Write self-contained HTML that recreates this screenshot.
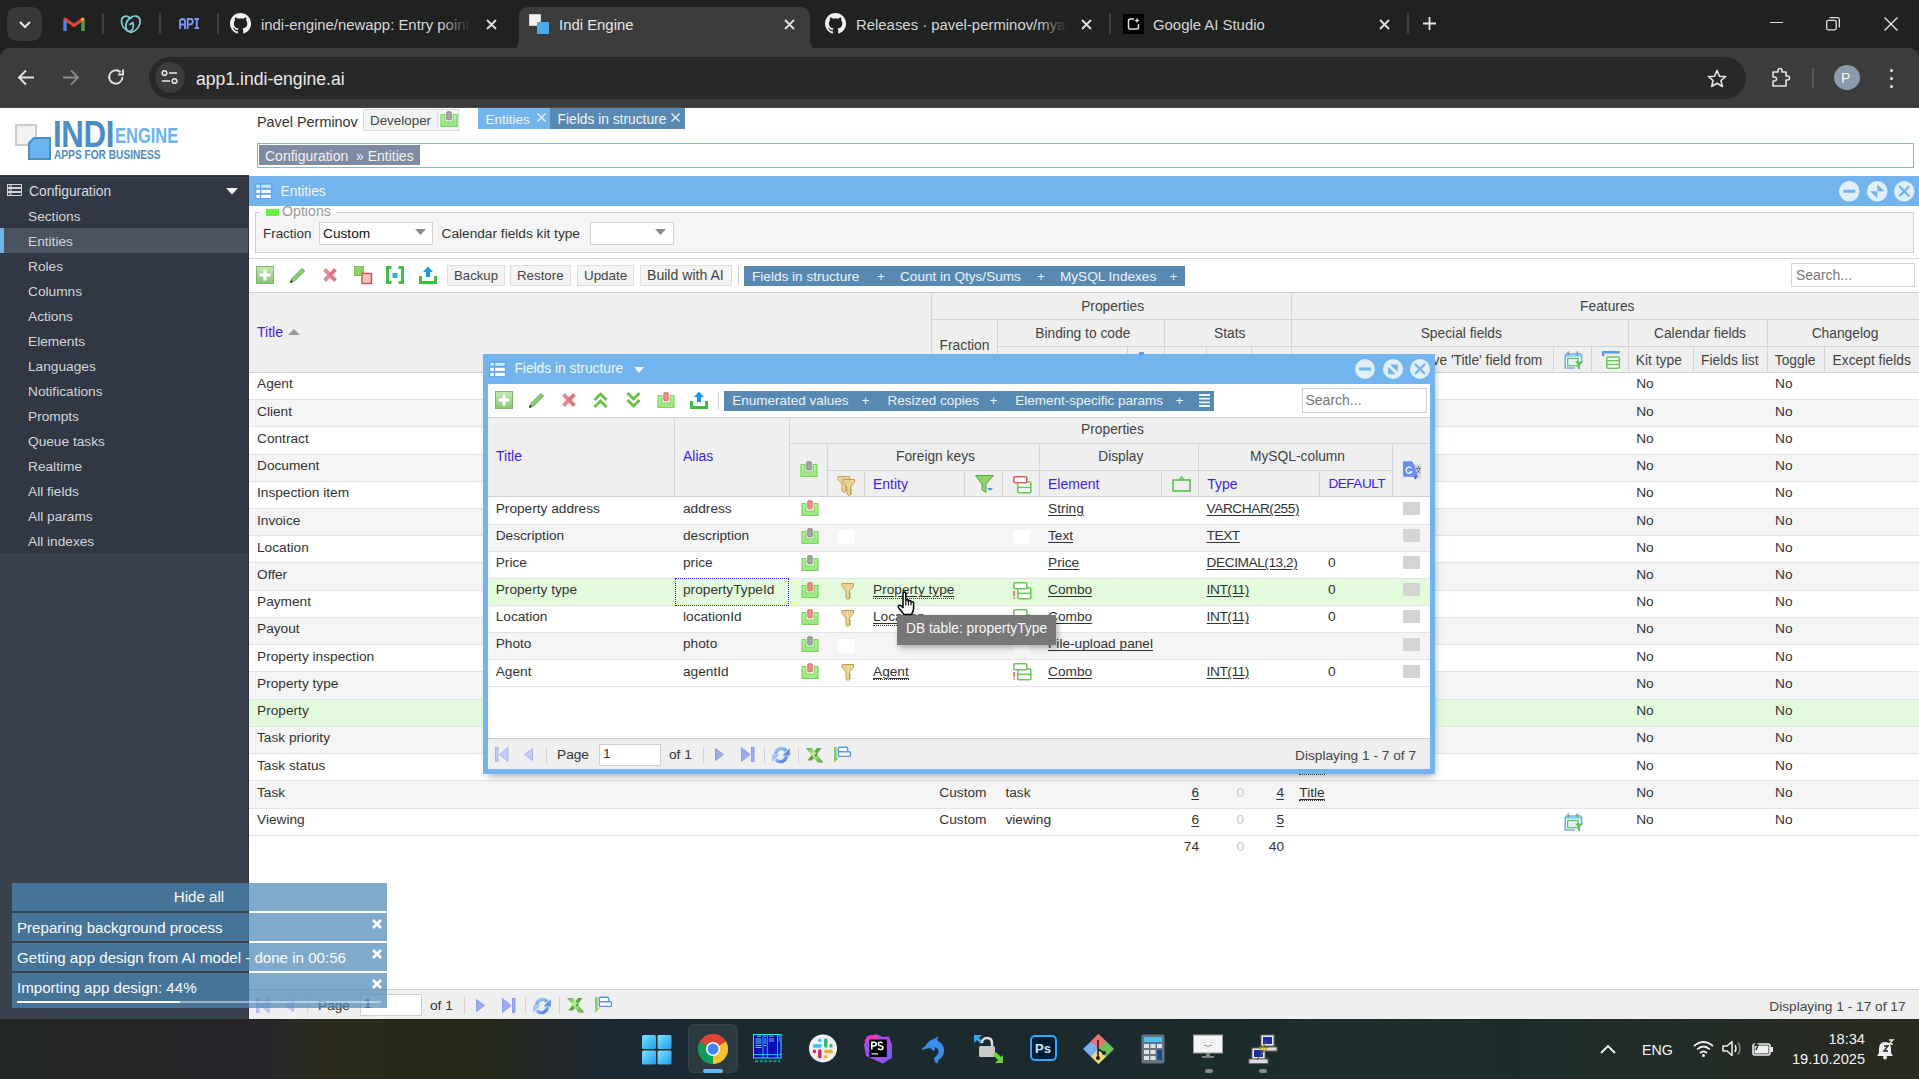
<!DOCTYPE html><html><head><meta charset="utf-8"><style>
*{box-sizing:border-box;margin:0;padding:0}
html,body{width:1919px;height:1079px;overflow:hidden;background:#fff;font-family:"Liberation Sans",sans-serif;font-size:13.6px;color:#333}
.a{position:absolute}
.t{position:absolute;white-space:nowrap;line-height:1}
svg{position:absolute;overflow:visible}
</style></head><body>
<div class="a" style="left:0px;top:0px;width:1919px;height:60px;background:#202121;"></div>
<div class="a" style="left:0px;top:48px;width:1919px;height:60px;background:#3c3c3c;border-radius:9px 9px 0 0"></div>
<div class="a" style="left:0px;top:107px;width:1919px;height:1px;background:#474847;"></div>
<div class="a" style="left:7px;top:7px;width:35px;height:34px;background:#383838;border-radius:10px"></div>
<svg style="left:18px;top:20px;" width="14" height="9" viewBox="0 0 14 9"><path d="M2 2 L7 7 L12 2" stroke="#e6e6e6" stroke-width="2" fill="none"/></svg>
<svg style="left:64px;top:16px;" width="20" height="16" viewBox="0 0 20 16"><path d="M1 15V3 L10 9.5 L19 3V15" fill="none" stroke="#ea4335" stroke-width="3" stroke-linejoin="round"/><path d="M1 15V4" stroke="#4285f4" stroke-width="3"/><path d="M19 15V4" stroke="#34a853" stroke-width="3"/><path d="M17.5 2.5L19.5 4" stroke="#fbbc04" stroke-width="3"/></svg>
<div class="a" style="left:102px;top:13px;width:2px;height:21px;background:#404040;border-radius:1px"></div>
<div class="a" style="left:159px;top:13px;width:2px;height:21px;background:#404040;border-radius:1px"></div>
<div class="a" style="left:217px;top:13px;width:2px;height:21px;background:#404040;border-radius:1px"></div>
<div class="a" style="left:1109px;top:13px;width:2px;height:21px;background:#404040;border-radius:1px"></div>
<div class="a" style="left:1407px;top:13px;width:2px;height:21px;background:#404040;border-radius:1px"></div>
<svg style="left:120px;top:14px;" width="22" height="20" viewBox="0 0 22 20"><path d="M11 18.5 C4 16 1 11 1.5 6.5 C2 2 6.5 1 9.5 3.5 M11 3.6 C14 1 19 1.5 20 6 C21 11 17.5 16.5 11 18.5" fill="none" stroke="#80d2d8" stroke-width="1.7" stroke-linecap="round"/><path d="M11.5 3.5 C7 5.5 5 10 6 14 C7 18 11 18.5 12.5 15 C13.5 12.5 13.5 10 13 8.5 L10 10.5" fill="none" stroke="#80d2d8" stroke-width="1.7" stroke-linecap="round" stroke-linejoin="round"/></svg>
<svg style="left:179px;top:18px;" width="21" height="11" viewBox="0 0 21 11"><path d="M1 11V3.5Q1 1 3.5 1Q6 1 6 3.5V11M1 6.5H6" fill="none" stroke="#7f9af2" stroke-width="1.8"/><path d="M8.7 11V1H11.5Q13.8 1 13.8 3.6Q13.8 6.3 11.5 6.3H8.7" fill="none" stroke="#7f9af2" stroke-width="1.8"/><path d="M15.5 1H20M15.5 10.1H20M17.75 1V10.1" fill="none" stroke="#7f9af2" stroke-width="1.8"/></svg>
<svg style="left:230px;top:13px;" width="21" height="21" viewBox="0 0 21 21"><path fill="#f0f0f0" d="M10.5 0C4.7 0 0 4.7 0 10.5c0 4.6 3 8.6 7.2 10 .5.1.7-.2.7-.5v-1.8c-2.9.6-3.5-1.4-3.5-1.4-.5-1.2-1.2-1.5-1.2-1.5-.9-.6.1-.6.1-.6 1 .1 1.6 1.1 1.6 1.1.9 1.6 2.5 1.1 3.1.9.1-.7.4-1.1.7-1.4-2.3-.3-4.8-1.2-4.8-5.1 0-1.1.4-2.1 1.1-2.8-.1-.3-.5-1.3.1-2.8 0 0 .9-.3 2.9 1.1.8-.2 1.7-.3 2.6-.3s1.8.1 2.6.3c2-1.4 2.9-1.1 2.9-1.1.6 1.5.2 2.5.1 2.8.7.7 1.1 1.7 1.1 2.8 0 4-2.4 4.8-4.8 5.1.4.3.7 1 .7 1.9v2.8c0 .3.2.6.7.5 4.2-1.4 7.2-5.4 7.2-10C21 4.7 16.3 0 10.5 0z"/></svg>
<svg style="left:825px;top:13px;" width="21" height="21" viewBox="0 0 21 21"><path fill="#f0f0f0" d="M10.5 0C4.7 0 0 4.7 0 10.5c0 4.6 3 8.6 7.2 10 .5.1.7-.2.7-.5v-1.8c-2.9.6-3.5-1.4-3.5-1.4-.5-1.2-1.2-1.5-1.2-1.5-.9-.6.1-.6.1-.6 1 .1 1.6 1.1 1.6 1.1.9 1.6 2.5 1.1 3.1.9.1-.7.4-1.1.7-1.4-2.3-.3-4.8-1.2-4.8-5.1 0-1.1.4-2.1 1.1-2.8-.1-.3-.5-1.3.1-2.8 0 0 .9-.3 2.9 1.1.8-.2 1.7-.3 2.6-.3s1.8.1 2.6.3c2-1.4 2.9-1.1 2.9-1.1.6 1.5.2 2.5.1 2.8.7.7 1.1 1.7 1.1 2.8 0 4-2.4 4.8-4.8 5.1.4.3.7 1 .7 1.9v2.8c0 .3.2.6.7.5 4.2-1.4 7.2-5.4 7.2-10C21 4.7 16.3 0 10.5 0z"/></svg>
<div class="a" style="left:261px;top:8px;width:210px;height:30px;overflow:hidden">
<div class="t" style="left:0px;top:9.6px;font-size:14.9px;color:#d6d6d6;">indi-engine/newapp: Entry point</div>
</div>
<div class="a" style="left:440px;top:8px;width:32px;height:30px;background:linear-gradient(90deg,rgba(32,33,33,0),#202121 95%);"></div>
<svg style="left:486px;top:19px;" width="11" height="11" viewBox="0 0 11 11"><path d="M1 1L10 10M10 1L1 10" stroke="#e0e0e0" stroke-width="1.8"/></svg>
<div class="a" style="left:519px;top:7px;width:291px;height:42px;background:#3c3c3c;border-radius:9px 9px 0 0"></div>
<svg style="left:511px;top:39px;" width="8" height="10" viewBox="0 0 8 10"><path d="M0 10 Q8 10 8 0 V10Z" fill="#3c3c3c"/></svg>
<svg style="left:810px;top:39px;" width="8" height="10" viewBox="0 0 8 10"><path d="M8 10 Q0 10 0 0 V10Z" fill="#3c3c3c"/></svg>
<svg style="left:529px;top:14px;" width="21" height="20" viewBox="0 0 21 20"><rect x="0.5" y="0.5" width="11" height="11" fill="#f2f2f2" stroke="#cfcfcf"/><rect x="8" y="8" width="12" height="12" fill="#4aa8ee"/></svg>
<div class="t" style="left:559px;top:17.6px;font-size:14.9px;color:#e6e6e6;">Indi Engine</div>
<svg style="left:784px;top:19px;" width="11" height="11" viewBox="0 0 11 11"><path d="M1 1L10 10M10 1L1 10" stroke="#e0e0e0" stroke-width="1.8"/></svg>
<div class="a" style="left:856px;top:8px;width:212px;height:30px;overflow:hidden">
<div class="t" style="left:0px;top:9.6px;font-size:14.9px;color:#d6d6d6;">Releases · pavel-perminov/myapp</div>
</div>
<div class="a" style="left:1038px;top:8px;width:31px;height:30px;background:linear-gradient(90deg,rgba(32,33,33,0),#202121 95%);"></div>
<svg style="left:1081px;top:19px;" width="11" height="11" viewBox="0 0 11 11"><path d="M1 1L10 10M10 1L1 10" stroke="#e0e0e0" stroke-width="1.8"/></svg>
<div class="a" style="left:1123px;top:14px;width:21px;height:20px;background:#000;"></div>
<svg style="left:1127px;top:17px;" width="14" height="14" viewBox="0 0 14 14"><path d="M7 2 H3 Q1.5 2 1.5 3.5 V10.5 Q1.5 12 3 12 H10 Q11.5 12 11.5 10.5 V7" fill="none" stroke="#e0e0e0" stroke-width="1.5"/><path d="M10 0.5 L10.8 2.7 L13 3.5 L10.8 4.3 L10 6.5 L9.2 4.3 L7 3.5 L9.2 2.7Z" fill="#e0e0e0"/></svg>
<div class="t" style="left:1153px;top:17.6px;font-size:14.9px;color:#d6d6d6;">Google AI Studio</div>
<svg style="left:1379px;top:19px;" width="11" height="11" viewBox="0 0 11 11"><path d="M1 1L10 10M10 1L1 10" stroke="#e0e0e0" stroke-width="1.8"/></svg>
<svg style="left:1423px;top:17px;" width="13" height="13" viewBox="0 0 13 13"><path d="M6.5 0V13M0 6.5H13" stroke="#e6e6e6" stroke-width="1.8"/></svg>
<div class="a" style="left:1770px;top:22px;width:13px;height:1.3px;background:#e0e0e0;"></div>
<svg style="left:1826px;top:17px;" width="14" height="14" viewBox="0 0 14 14"><rect x="0.7" y="3.3" width="9.5" height="9.5" rx="1.5" fill="none" stroke="#e0e0e0" stroke-width="1.3"/><path d="M3.5 0.7H11.5Q13.3 0.7 13.3 2.5V10.5" fill="none" stroke="#e0e0e0" stroke-width="1.3"/></svg>
<svg style="left:1884px;top:17px;" width="14" height="14" viewBox="0 0 14 14"><path d="M0.5 0.5L13.5 13.5M13.5 0.5L0.5 13.5" stroke="#e6e6e6" stroke-width="1.4"/></svg>
<svg style="left:17px;top:69px;" width="18" height="17" viewBox="0 0 18 17"><path d="M17 8.5H2M9 1.5L2 8.5L9 15.5" fill="none" stroke="#e3e3e3" stroke-width="1.9"/></svg>
<svg style="left:62px;top:69px;" width="18" height="17" viewBox="0 0 18 17"><path d="M1 8.5H16M9 1.5L16 8.5L9 15.5" fill="none" stroke="#8a8a8a" stroke-width="1.9"/></svg>
<svg style="left:107px;top:68px;" width="18" height="18" viewBox="0 0 18 18"><path d="M15.5 9 A6.7 6.7 0 1 1 13.5 4.2" fill="none" stroke="#e3e3e3" stroke-width="1.9"/><path d="M16 1.5V6.5H11" fill="none" stroke="#e3e3e3" stroke-width="1.9"/></svg>
<div class="a" style="left:149px;top:57px;width:1597px;height:42px;background:#282828;border-radius:21px"></div>
<div class="a" style="left:155px;top:62px;width:30px;height:31px;background:#3c3c3c;border-radius:50%"></div>
<svg style="left:161px;top:70px;" width="18" height="14" viewBox="0 0 18 14"><circle cx="3.5" cy="3" r="2.3" fill="none" stroke="#e3e3e3" stroke-width="1.6"/><path d="M8 3H16" stroke="#e3e3e3" stroke-width="1.6"/><circle cx="13.5" cy="11" r="2.3" fill="none" stroke="#e3e3e3" stroke-width="1.6"/><path d="M1 11H9" stroke="#e3e3e3" stroke-width="1.6"/></svg>
<div class="t" style="left:196px;top:71px;font-size:17.6px;color:#e8e8e8;">app1.indi-engine.ai</div>
<svg style="left:1707px;top:69px;" width="20" height="19" viewBox="0 0 20 19"><path d="M10 1.5L12.5 7.2L18.6 7.6L13.9 11.5L15.4 17.5L10 14.2L4.6 17.5L6.1 11.5L1.4 7.6L7.5 7.2Z" fill="none" stroke="#e3e3e3" stroke-width="1.6" stroke-linejoin="round"/></svg>
<svg style="left:1771px;top:67px;" width="21" height="21" viewBox="0 0 21 21"><path d="M2 5H7V3.5A2 2 0 0 1 11 3.5V5H15V9H16.5A2 2 0 0 1 16.5 13H15V19H2V14H3.5A2 2 0 0 0 3.5 10H2Z" fill="none" stroke="#e3e3e3" stroke-width="1.6" stroke-linejoin="round"/></svg>
<div class="a" style="left:1812px;top:68px;width:2px;height:20px;background:#5a5a5a;"></div>
<div class="a" style="left:1834px;top:65px;width:26px;height:25px;background:#8a9cab;border-radius:50%"></div>
<div class="t" style="left:1841px;top:71px;font-size:14px;color:#f4f4f4;">P</div>
<div class="a" style="left:1890px;top:68.5px;width:3.4px;height:3.4px;background:#e3e3e3;border-radius:50%"></div>
<div class="a" style="left:1890px;top:76.5px;width:3.4px;height:3.4px;background:#e3e3e3;border-radius:50%"></div>
<div class="a" style="left:1890px;top:84.5px;width:3.4px;height:3.4px;background:#e3e3e3;border-radius:50%"></div>
<svg style="left:15px;top:124px;" width="36" height="35" viewBox="0 0 36 35"><rect x="1" y="1" width="20" height="20" fill="#f2f2f2" stroke="#cccccc" stroke-width="2"/><path d="M19 14 H35 V35 H14 V19 Z" fill="#6ab4f0" stroke="#4d8dc1" stroke-width="2"/></svg>
<div class="t" style="left:53px;top:115.7px;font-size:37.7px;color:#4d8dc1;font-weight:bold;transform:scaleX(0.83);transform-origin:0 0;letter-spacing:-0.5px">INDI</div>
<div class="t" style="left:115px;top:125.1px;font-size:22.3px;color:#6ab4f0;font-weight:bold;transform:scaleX(0.74);transform-origin:0 0">ENGINE</div>
<div class="t" style="left:54px;top:148.0px;font-size:13.6px;color:#4d8dc1;font-weight:bold;transform:scaleX(0.747);transform-origin:0 0">APPS FOR BUSINESS</div>
<div class="t" style="left:257px;top:114.5px;font-size:14.4px;color:#333;">Pavel Perminov</div>
<div class="a" style="left:363px;top:109px;width:96px;height:22px;background:#f4f4f4;border:1px solid #dcdcdc"></div>
<div class="a" style="left:437px;top:110px;width:1px;height:20px;background:#dcdcdc;"></div>
<div class="t" style="left:370px;top:113.5px;font-size:13.4px;color:#444;">Developer</div>
<svg style="left:440px;top:111px;" width="18" height="17" viewBox="0 0 18 17"><defs><linearGradient id="su" x1="0" y1="0" x2="0" y2="1"><stop offset="0" stop-color="#b4f59c"/><stop offset="1" stop-color="#98e67e"/></linearGradient></defs><path d="M1 3.5 H4.8 V11 H13.2 V3.5 H17 V15.5 H1 Z" fill="url(#su)" stroke="#78d65c" stroke-width="1.2" stroke-linejoin="round"/><rect x="6.8" y="0.8" width="4.4" height="8" rx="0.6" fill="#a8a8a8" stroke="#7a7a7a" stroke-width="0.9"/></svg>
<div class="a" style="left:478px;top:108px;width:72px;height:21px;background:#72b4ee;"></div>
<div class="t" style="left:485.5px;top:112.5px;font-size:13.5px;color:#f4f4f4;">Entities</div>
<svg style="left:537px;top:113px;" width="9" height="9" viewBox="0 0 9 9"><path d="M0.5 0.5L8.5 8.5M8.5 0.5L0.5 8.5" stroke="#eaf3fb" stroke-width="1.3"/></svg>
<div class="a" style="left:550px;top:108px;width:135px;height:21px;background:#5889b3;"></div>
<div class="t" style="left:557.5px;top:112.5px;font-size:13.8px;color:#f4f4f4;">Fields in structure</div>
<svg style="left:671px;top:113px;" width="9" height="9" viewBox="0 0 9 9"><path d="M0.5 0.5L8.5 8.5M8.5 0.5L0.5 8.5" stroke="#eaf3fb" stroke-width="1.3"/></svg>
<div class="a" style="left:257px;top:143px;width:1657px;height:25px;background:#fff;border:1px solid #7ab8ef"></div>
<div class="a" style="left:259px;top:145px;width:161px;height:20px;background:#7f8aa3;"></div>
<div class="t" style="left:265px;top:149px;font-size:14px;color:#f2f2f2;">Configuration &nbsp;» Entities</div>
<div class="a" style="left:0px;top:175px;width:249px;height:844px;background:#38414c;"></div>
<div class="a" style="left:0px;top:176px;width:248px;height:377px;background:#313743;"></div>
<div class="a" style="left:0px;top:176px;width:248px;height:1px;background:#262b33;"></div>
<div class="a" style="left:0px;top:177px;width:248px;height:1px;background:#3a424e;"></div>
<div class="a" style="left:248px;top:175px;width:1px;height:844px;background:#2c333d;"></div>
<svg style="left:7px;top:184px;" width="15" height="12" viewBox="0 0 15 12"><rect x="0.5" y="0.5" width="14" height="3" fill="none" stroke="#cfd3d8"/><rect x="0.5" y="4.5" width="14" height="3" fill="none" stroke="#cfd3d8"/><rect x="0.5" y="8.5" width="14" height="3" fill="none" stroke="#cfd3d8"/><rect x="2" y="1.5" width="3" height="1" fill="#cfd3d8"/><rect x="2" y="5.5" width="3" height="1" fill="#cfd3d8"/><rect x="2" y="9.5" width="3" height="1" fill="#cfd3d8"/></svg>
<div class="t" style="left:29px;top:184.5px;font-size:13.8px;color:#d9dde2;">Configuration</div>
<svg style="left:226px;top:188px;" width="12" height="7" viewBox="0 0 12 7"><path d="M0 0H12L6 6.5Z" fill="#f4f4f4"/></svg>
<div class="a" style="left:0px;top:228px;width:248px;height:25px;background:#4b5260;"></div>
<div class="a" style="left:0px;top:228px;width:4px;height:25px;background:#6fb3ea;"></div>
<div class="t" style="left:28px;top:209.5px;font-size:13.7px;color:#d2d6db;">Sections</div>
<div class="t" style="left:28px;top:234.5px;font-size:13.7px;color:#d2d6db;">Entities</div>
<div class="t" style="left:28px;top:259.5px;font-size:13.7px;color:#d2d6db;">Roles</div>
<div class="t" style="left:28px;top:284.5px;font-size:13.7px;color:#d2d6db;">Columns</div>
<div class="t" style="left:28px;top:309.5px;font-size:13.7px;color:#d2d6db;">Actions</div>
<div class="t" style="left:28px;top:334.5px;font-size:13.7px;color:#d2d6db;">Elements</div>
<div class="t" style="left:28px;top:359.5px;font-size:13.7px;color:#d2d6db;">Languages</div>
<div class="t" style="left:28px;top:384.5px;font-size:13.7px;color:#d2d6db;">Notifications</div>
<div class="t" style="left:28px;top:409.5px;font-size:13.7px;color:#d2d6db;">Prompts</div>
<div class="t" style="left:28px;top:434.5px;font-size:13.7px;color:#d2d6db;">Queue tasks</div>
<div class="t" style="left:28px;top:459.5px;font-size:13.7px;color:#d2d6db;">Realtime</div>
<div class="t" style="left:28px;top:484.5px;font-size:13.7px;color:#d2d6db;">All fields</div>
<div class="t" style="left:28px;top:509.5px;font-size:13.7px;color:#d2d6db;">All params</div>
<div class="t" style="left:28px;top:534.5px;font-size:13.7px;color:#d2d6db;">All indexes</div>
<div class="a" style="left:249px;top:176px;width:1670px;height:30px;background:#72b4ee;"></div>
<svg style="left:255.3px;top:183.3px;" width="17" height="17" viewBox="0 0 17 17"><rect x="0" y="0" width="17.4" height="16.2" rx="1.6" fill="#69a3f0"/><rect x="1.3" y="1.8" width="3.6" height="3" fill="#bdf0fb"/><rect x="6.2" y="1.8" width="9.6" height="3" fill="#bdf0fb"/><rect x="1.3" y="6.8" width="3.6" height="3.2" fill="#fff"/><rect x="6.2" y="6.8" width="9.6" height="3.2" fill="#fff"/><rect x="1.3" y="11.8" width="3.6" height="3.2" fill="#fff"/><rect x="6.2" y="11.8" width="9.6" height="3.2" fill="#fff"/></svg>
<div class="t" style="left:280.5px;top:184.5px;font-size:13.8px;color:#f4f6f8;">Entities</div>
<svg style="left:1839px;top:180.5px;" width="20.5" height="20.5" viewBox="0 0 20.5 20.5"><circle cx="10.25" cy="10.25" r="10.25" fill="#e1eefb"/><rect x="4.25" y="8.75" width="12" height="3" fill="#72b4ee"/></svg>
<svg style="left:1866.5px;top:180.5px;" width="20.5" height="20.5" viewBox="0 0 20.5 20.5"><circle cx="10.25" cy="10.25" r="10.25" fill="#e1eefb"/><path d="M10.25 3.25 V10.25 H17.25 Z" fill="#72b4ee"/><path d="M3.25 10.25 H10.25 V17.25 Z" fill="#72b4ee"/></svg>
<svg style="left:1894px;top:180.5px;" width="20.5" height="20.5" viewBox="0 0 20.5 20.5"><circle cx="10.25" cy="10.25" r="10.25" fill="#e1eefb"/><path d="M5.25 5.25L15.25 15.25M15.25 5.25L5.25 15.25" stroke="#72b4ee" stroke-width="2.2"/></svg>
<div class="a" style="left:249px;top:206px;width:1670px;height:86px;background:#fff;"></div>
<div class="a" style="left:255px;top:212px;width:1659px;height:41px;background:#f5f5f5;border:1px solid #cfcfcf;border-top:1px solid #cfcfcf"></div>
<div class="a" style="left:260px;top:211px;width:76px;height:3px;background:#fff;"></div>
<div class="a" style="left:266px;top:209px;width:13px;height:6.5px;background:#6cf048;"></div>
<div class="t" style="left:282px;top:203.5px;font-size:14.2px;color:#999;">Options</div>
<div class="t" style="left:263px;top:226.5px;font-size:13.4px;color:#333;">Fraction</div>
<div class="a" style="left:319px;top:221.5px;width:114px;height:23px;background:#fff;border:1px solid #d2d2d2"></div>
<div class="t" style="left:323px;top:226.5px;font-size:13.7px;color:#111;">Custom</div>
<svg style="left:415px;top:229px;" width="11" height="6" viewBox="0 0 11 6"><path d="M0 0H11L5.5 6Z" fill="#8d8d8d"/></svg>
<div class="t" style="left:441.5px;top:226.5px;font-size:13.7px;color:#333;">Calendar fields kit type</div>
<div class="a" style="left:590px;top:221.5px;width:84px;height:23px;background:#fff;border:1px solid #d2d2d2"></div>
<svg style="left:655px;top:229px;" width="11" height="6" viewBox="0 0 11 6"><path d="M0 0H11L5.5 6Z" fill="#8d8d8d"/></svg>
<div class="a" style="left:249px;top:258px;width:1670px;height:1px;background:#d6d6d6;"></div>
<svg style="left:256px;top:266px;" width="18" height="18" viewBox="0 0 18 18"><defs><linearGradient id="ga" x1="0" y1="0" x2="0" y2="1"><stop offset="0" stop-color="#c2ecb0"/><stop offset="1" stop-color="#86c676"/></linearGradient></defs><rect x="0.5" y="0.5" width="17" height="17" fill="url(#ga)" stroke="#7fb86e"/><path d="M9 3.5V14.5M3.5 9H14.5" stroke="#fff" stroke-width="3.2"/></svg>
<svg style="left:289px;top:267px;" width="17" height="17" viewBox="0 0 17 17"><path d="M1.5 15.5 L3 11.5 L13 1.5 L15.5 4 L5.5 14 Z" fill="#8ed16c" stroke="#5aa546" stroke-width="1"/><path d="M1.5 15.5L3 13.5" stroke="#333" stroke-width="1.5"/></svg>
<svg style="left:322px;top:267px;" width="16" height="16" viewBox="0 0 16 16"><path d="M2.5 2.5L13.5 13.5M13.5 2.5L2.5 13.5" stroke="#e58a96" stroke-width="4"/><path d="M8 8L13.5 13.5M8 8L13.5 2.5" stroke="#d05a6a" stroke-width="2" opacity="0.5"/></svg>
<svg style="left:354px;top:266px;" width="18" height="18" viewBox="0 0 18 18"><rect x="0.5" y="0.5" width="9" height="9" fill="#8ed46a" stroke="#79c255"/><rect x="8" y="7.5" width="9.5" height="10" fill="#f4c2c2" stroke="#d6504b" stroke-width="1.4"/></svg>
<svg style="left:386px;top:266px;" width="18" height="18" viewBox="0 0 18 18"><path d="M5.5 1.5H1.5V16.5H5.5M12.5 1.5H16.5V16.5H12.5" fill="none" stroke="#3cc24a" stroke-width="3"/><rect x="6.5" y="7" width="5" height="5" fill="#3aa8e8"/></svg>
<svg style="left:419px;top:266px;" width="18" height="18" viewBox="0 0 18 18"><path d="M1.5 10V16.5H16.5V10" fill="none" stroke="#38c040" stroke-width="3"/><path d="M9 0.5L14 6H11V11H7V6H4Z" fill="#1a9ae6"/></svg>
<div class="a" style="left:447px;top:264.5px;width:58px;height:21px;background:#f4f4f4;border:1px solid #dedede"></div>
<div class="t" style="left:454px;top:268.83px;font-size:13.2px;color:#444;">Backup</div>
<div class="a" style="left:510px;top:264.5px;width:61px;height:21px;background:#f4f4f4;border:1px solid #dedede"></div>
<div class="t" style="left:517px;top:268.74px;font-size:13.3px;color:#444;">Restore</div>
<div class="a" style="left:577px;top:264.5px;width:57px;height:21px;background:#f4f4f4;border:1px solid #dedede"></div>
<div class="t" style="left:584px;top:268.66px;font-size:13.4px;color:#444;">Update</div>
<div class="a" style="left:640px;top:264.5px;width:92px;height:21px;background:#f4f4f4;border:1px solid #dedede"></div>
<div class="t" style="left:647px;top:268.06px;font-size:14.1px;color:#444;">Build with AI</div>
<div class="a" style="left:738px;top:266px;width:1px;height:19px;background:#d0d0d0;"></div>
<div class="a" style="left:744px;top:266px;width:441px;height:20px;background:#5889b3;"></div>
<div class="t" style="left:752px;top:269.5px;font-size:13.6px;color:#eef3f8;">Fields in structure</div>
<div class="t" style="left:877px;top:269.5px;font-size:13.6px;color:#eef3f8;">+</div>
<div class="t" style="left:900px;top:269.5px;font-size:13.6px;color:#eef3f8;">Count in Qtys/Sums</div>
<div class="t" style="left:1037px;top:269.5px;font-size:13.6px;color:#eef3f8;">+</div>
<div class="t" style="left:1060px;top:269.5px;font-size:13.6px;color:#eef3f8;">MySQL Indexes</div>
<div class="t" style="left:1169.5px;top:269.5px;font-size:13.6px;color:#eef3f8;">+</div>
<div class="a" style="left:1791px;top:263px;width:124px;height:24px;background:#fff;border:1px solid #d4d4d4"></div>
<div class="t" style="left:1796px;top:267.5px;font-size:14px;color:#777;">Search...</div>
<div class="a" style="left:249px;top:292px;width:1670px;height:81px;background:#efefef;"></div>
<div class="a" style="left:249px;top:292px;width:1670px;height:1px;background:#d0d0d0;"></div>
<div class="a" style="left:249px;top:372px;width:1670px;height:1px;background:#cfcfcf;"></div>
<div class="a" style="left:931px;top:293px;width:1px;height:79px;background:#d4d4d4;"></div>
<div class="a" style="left:932px;top:319px;width:987px;height:1px;background:#d4d4d4;"></div>
<div class="a" style="left:997px;top:320px;width:1px;height:52px;background:#d4d4d4;"></div>
<div class="a" style="left:997px;top:346px;width:294px;height:1px;background:#d4d4d4;"></div>
<div class="a" style="left:1164px;top:320px;width:1px;height:52px;background:#d4d4d4;"></div>
<div class="a" style="left:1291px;top:293px;width:1px;height:79px;background:#d4d4d4;"></div>
<div class="a" style="left:1127px;top:347px;width:1px;height:25px;background:#d4d4d4;"></div>
<div class="a" style="left:1206px;top:347px;width:1px;height:25px;background:#d4d4d4;"></div>
<div class="a" style="left:1251px;top:347px;width:1px;height:25px;background:#d4d4d4;"></div>
<div class="a" style="left:1291px;top:346px;width:628px;height:1px;background:#d4d4d4;"></div>
<div class="a" style="left:1628px;top:320px;width:1px;height:52px;background:#d4d4d4;"></div>
<div class="a" style="left:1767px;top:320px;width:1px;height:52px;background:#d4d4d4;"></div>
<div class="a" style="left:1553px;top:347px;width:1px;height:25px;background:#d4d4d4;"></div>
<div class="a" style="left:1591px;top:347px;width:1px;height:25px;background:#d4d4d4;"></div>
<div class="a" style="left:1693px;top:347px;width:1px;height:25px;background:#d4d4d4;"></div>
<div class="a" style="left:1824px;top:347px;width:1px;height:25px;background:#d4d4d4;"></div>
<div class="t" style="left:257px;top:325.15px;font-size:14px;color:#3d1fe6;">Title</div>
<svg style="left:288px;top:329px;" width="12" height="6" viewBox="0 0 12 6"><path d="M0 6H12L6 0Z" fill="#9a9a9a"/></svg>
<div class="t" style="left:1112.6px;top:299.62px;font-size:13.8px;color:#444;transform:translateX(-50%);">Properties</div>
<div class="t" style="left:1607.3px;top:299.62px;font-size:13.8px;color:#444;transform:translateX(-50%);">Features</div>
<div class="t" style="left:964.5px;top:338.72px;font-size:13.8px;color:#444;transform:translateX(-50%);">Fraction</div>
<div class="t" style="left:1082.8px;top:327.12px;font-size:13.8px;color:#444;transform:translateX(-50%);">Binding to code</div>
<div class="t" style="left:1229.8px;top:327.12px;font-size:13.8px;color:#444;transform:translateX(-50%);">Stats</div>
<div class="t" style="left:1461.3px;top:327.42px;font-size:13.8px;color:#444;transform:translateX(-50%);">Special fields</div>
<div class="t" style="left:1700px;top:327.42px;font-size:13.8px;color:#444;transform:translateX(-50%);">Calendar fields</div>
<div class="t" style="left:1845px;top:327.42px;font-size:13.8px;color:#444;transform:translateX(-50%);">Changelog</div>
<div class="t" style="left:1432.5px;top:354.22px;font-size:13.8px;color:#444;">ve 'Title' field from</div>
<svg style="left:1564px;top:351px;" width="19" height="18" viewBox="0 0 19 18"><path d="M11 17H1.2V4.5L2.5 3H16.3L17.6 4.5V12" fill="#fff" stroke="#72aef0" stroke-width="1.6"/><rect x="2" y="3.6" width="15" height="2.2" fill="#7ad8f8"/><rect x="3.3" y="0.5" width="2" height="4" fill="#9a9a9a"/><rect x="12.3" y="0.5" width="2" height="4" fill="#9a9a9a"/><rect x="3.6" y="7.4" width="10.5" height="7.4" fill="#e4f0f4" stroke="#62c254" stroke-width="1.3"/><path d="M11 10.6H19L16 14V18.5L14 17.5V14Z" fill="#62c254"/></svg>
<svg style="left:1602px;top:351px;" width="18" height="18" viewBox="0 0 18 18"><path d="M1.2 5V1.3H17.6" fill="none" stroke="#5a9af0" stroke-width="2.6" stroke-linejoin="round"/><rect x="4.8" y="5.9" width="12.6" height="11.4" rx="1" fill="#fff" stroke="#6cc95a" stroke-width="1.5"/><path d="M4.8 9.7H17.4M4.8 13.5H17.4" stroke="#6cc95a" stroke-width="1.5"/></svg>
<div class="t" style="left:1635.8px;top:354.22px;font-size:13.8px;color:#444;">Kit type</div>
<div class="t" style="left:1701px;top:354.22px;font-size:13.8px;color:#444;">Fields list</div>
<div class="t" style="left:1774.8px;top:354.22px;font-size:13.8px;color:#444;">Toggle</div>
<div class="t" style="left:1832.6px;top:354.22px;font-size:13.8px;color:#444;">Except fields</div>
<div class="a" style="left:249px;top:372.8px;width:1670px;height:27.24px;background:#fff;"></div>
<div class="a" style="left:249px;top:399.04px;width:1670px;height:1px;background:#e4e4e4;"></div>
<div class="t" style="left:257px;top:377.3px;font-size:13.7px;color:#333;">Agent</div>
<div class="t" style="left:1636.2px;top:377.3px;font-size:13.7px;color:#333;">No</div>
<div class="t" style="left:1775px;top:377.3px;font-size:13.7px;color:#333;">No</div>
<div class="a" style="left:249px;top:400.04px;width:1670px;height:27.24px;background:#f5f5f5;"></div>
<div class="a" style="left:249px;top:426.28000000000003px;width:1670px;height:1px;background:#e4e4e4;"></div>
<div class="t" style="left:257px;top:404.54px;font-size:13.7px;color:#333;">Client</div>
<div class="t" style="left:1636.2px;top:404.54px;font-size:13.7px;color:#333;">No</div>
<div class="t" style="left:1775px;top:404.54px;font-size:13.7px;color:#333;">No</div>
<div class="a" style="left:249px;top:427.28000000000003px;width:1670px;height:27.24px;background:#fff;"></div>
<div class="a" style="left:249px;top:453.52000000000004px;width:1670px;height:1px;background:#e4e4e4;"></div>
<div class="t" style="left:257px;top:431.78px;font-size:13.7px;color:#333;">Contract</div>
<div class="t" style="left:1636.2px;top:431.78px;font-size:13.7px;color:#333;">No</div>
<div class="t" style="left:1775px;top:431.78px;font-size:13.7px;color:#333;">No</div>
<div class="a" style="left:249px;top:454.52px;width:1670px;height:27.24px;background:#f5f5f5;"></div>
<div class="a" style="left:249px;top:480.76px;width:1670px;height:1px;background:#e4e4e4;"></div>
<div class="t" style="left:257px;top:459.02px;font-size:13.7px;color:#333;">Document</div>
<div class="t" style="left:1636.2px;top:459.02px;font-size:13.7px;color:#333;">No</div>
<div class="t" style="left:1775px;top:459.02px;font-size:13.7px;color:#333;">No</div>
<div class="a" style="left:249px;top:481.76px;width:1670px;height:27.24px;background:#fff;"></div>
<div class="a" style="left:249px;top:508.0px;width:1670px;height:1px;background:#e4e4e4;"></div>
<div class="t" style="left:257px;top:486.26px;font-size:13.7px;color:#333;">Inspection item</div>
<div class="t" style="left:1636.2px;top:486.26px;font-size:13.7px;color:#333;">No</div>
<div class="t" style="left:1775px;top:486.26px;font-size:13.7px;color:#333;">No</div>
<div class="a" style="left:249px;top:509.0px;width:1670px;height:27.24px;background:#f5f5f5;"></div>
<div class="a" style="left:249px;top:535.24px;width:1670px;height:1px;background:#e4e4e4;"></div>
<div class="t" style="left:257px;top:513.5px;font-size:13.7px;color:#333;">Invoice</div>
<div class="t" style="left:1636.2px;top:513.5px;font-size:13.7px;color:#333;">No</div>
<div class="t" style="left:1775px;top:513.5px;font-size:13.7px;color:#333;">No</div>
<div class="a" style="left:249px;top:536.24px;width:1670px;height:27.24px;background:#fff;"></div>
<div class="a" style="left:249px;top:562.48px;width:1670px;height:1px;background:#e4e4e4;"></div>
<div class="t" style="left:257px;top:540.74px;font-size:13.7px;color:#333;">Location</div>
<div class="t" style="left:1636.2px;top:540.74px;font-size:13.7px;color:#333;">No</div>
<div class="t" style="left:1775px;top:540.74px;font-size:13.7px;color:#333;">No</div>
<div class="a" style="left:249px;top:563.48px;width:1670px;height:27.24px;background:#f5f5f5;"></div>
<div class="a" style="left:249px;top:589.72px;width:1670px;height:1px;background:#e4e4e4;"></div>
<div class="t" style="left:257px;top:567.98px;font-size:13.7px;color:#333;">Offer</div>
<div class="t" style="left:1636.2px;top:567.98px;font-size:13.7px;color:#333;">No</div>
<div class="t" style="left:1775px;top:567.98px;font-size:13.7px;color:#333;">No</div>
<div class="a" style="left:249px;top:590.72px;width:1670px;height:27.24px;background:#fff;"></div>
<div class="a" style="left:249px;top:616.96px;width:1670px;height:1px;background:#e4e4e4;"></div>
<div class="t" style="left:257px;top:595.22px;font-size:13.7px;color:#333;">Payment</div>
<div class="t" style="left:1636.2px;top:595.22px;font-size:13.7px;color:#333;">No</div>
<div class="t" style="left:1775px;top:595.22px;font-size:13.7px;color:#333;">No</div>
<div class="a" style="left:249px;top:617.96px;width:1670px;height:27.24px;background:#f5f5f5;"></div>
<div class="a" style="left:249px;top:644.2px;width:1670px;height:1px;background:#e4e4e4;"></div>
<div class="t" style="left:257px;top:622.46px;font-size:13.7px;color:#333;">Payout</div>
<div class="t" style="left:1636.2px;top:622.46px;font-size:13.7px;color:#333;">No</div>
<div class="t" style="left:1775px;top:622.46px;font-size:13.7px;color:#333;">No</div>
<div class="a" style="left:249px;top:645.2px;width:1670px;height:27.24px;background:#fff;"></div>
<div class="a" style="left:249px;top:671.44px;width:1670px;height:1px;background:#e4e4e4;"></div>
<div class="t" style="left:257px;top:649.7px;font-size:13.7px;color:#333;">Property inspection</div>
<div class="t" style="left:1636.2px;top:649.7px;font-size:13.7px;color:#333;">No</div>
<div class="t" style="left:1775px;top:649.7px;font-size:13.7px;color:#333;">No</div>
<div class="a" style="left:249px;top:672.44px;width:1670px;height:27.24px;background:#f5f5f5;"></div>
<div class="a" style="left:249px;top:698.6800000000001px;width:1670px;height:1px;background:#e4e4e4;"></div>
<div class="t" style="left:257px;top:676.94px;font-size:13.7px;color:#333;">Property type</div>
<div class="t" style="left:1636.2px;top:676.94px;font-size:13.7px;color:#333;">No</div>
<div class="t" style="left:1775px;top:676.94px;font-size:13.7px;color:#333;">No</div>
<div class="a" style="left:249px;top:699.6800000000001px;width:1670px;height:27.24px;background:#e3fbdc;"></div>
<div class="a" style="left:249px;top:725.9200000000001px;width:1670px;height:1px;background:#e4e4e4;"></div>
<div class="t" style="left:257px;top:704.18px;font-size:13.7px;color:#333;">Property</div>
<div class="t" style="left:1636.2px;top:704.18px;font-size:13.7px;color:#333;">No</div>
<div class="t" style="left:1775px;top:704.18px;font-size:13.7px;color:#333;">No</div>
<div class="a" style="left:249px;top:726.9200000000001px;width:1670px;height:27.24px;background:#f5f5f5;"></div>
<div class="a" style="left:249px;top:753.1600000000001px;width:1670px;height:1px;background:#e4e4e4;"></div>
<div class="t" style="left:257px;top:731.42px;font-size:13.7px;color:#333;">Task priority</div>
<div class="t" style="left:1636.2px;top:731.42px;font-size:13.7px;color:#333;">No</div>
<div class="t" style="left:1775px;top:731.42px;font-size:13.7px;color:#333;">No</div>
<div class="t" style="left:939.3px;top:731.42px;font-size:13.7px;color:#333;">Custom</div>
<div class="t" style="left:1005.4px;top:731.42px;font-size:13.7px;color:#333;">taskPriority</div>
<div class="t" style="right:720px;top:731.42px;font-size:13.7px;color:#333;text-decoration:underline;text-underline-offset:2px">6</div>
<div class="t" style="right:675px;top:731.42px;font-size:13.7px;color:#c8c8c8;">0</div>
<div class="t" style="right:635px;top:731.42px;font-size:13.7px;color:#333;text-decoration:underline;text-underline-offset:2px">3</div>
<div class="t" style="left:1299.3px;top:731.42px;font-size:13.7px;color:#333;text-decoration:underline;text-underline-offset:2px;border-bottom:1px dotted #333;padding-bottom:0px">Title</div>
<div class="a" style="left:249px;top:754.16px;width:1670px;height:27.24px;background:#fff;"></div>
<div class="a" style="left:249px;top:780.4px;width:1670px;height:1px;background:#e4e4e4;"></div>
<div class="t" style="left:257px;top:758.66px;font-size:13.7px;color:#333;">Task status</div>
<div class="t" style="left:1636.2px;top:758.66px;font-size:13.7px;color:#333;">No</div>
<div class="t" style="left:1775px;top:758.66px;font-size:13.7px;color:#333;">No</div>
<div class="t" style="left:939.3px;top:758.66px;font-size:13.7px;color:#333;">Custom</div>
<div class="t" style="left:1005.4px;top:758.66px;font-size:13.7px;color:#333;">taskStatus</div>
<div class="t" style="right:720px;top:758.66px;font-size:13.7px;color:#333;text-decoration:underline;text-underline-offset:2px">6</div>
<div class="t" style="right:675px;top:758.66px;font-size:13.7px;color:#c8c8c8;">0</div>
<div class="t" style="right:635px;top:758.66px;font-size:13.7px;color:#333;text-decoration:underline;text-underline-offset:2px">3</div>
<div class="t" style="left:1299.3px;top:758.66px;font-size:13.7px;color:#333;text-decoration:underline;text-underline-offset:2px;border-bottom:1px dotted #333;padding-bottom:0px">Title</div>
<div class="a" style="left:249px;top:781.4px;width:1670px;height:27.24px;background:#f5f5f5;"></div>
<div class="a" style="left:249px;top:807.64px;width:1670px;height:1px;background:#e4e4e4;"></div>
<div class="t" style="left:257px;top:785.9px;font-size:13.7px;color:#333;">Task</div>
<div class="t" style="left:1636.2px;top:785.9px;font-size:13.7px;color:#333;">No</div>
<div class="t" style="left:1775px;top:785.9px;font-size:13.7px;color:#333;">No</div>
<div class="t" style="left:939.3px;top:785.9px;font-size:13.7px;color:#333;">Custom</div>
<div class="t" style="left:1005.4px;top:785.9px;font-size:13.7px;color:#333;">task</div>
<div class="t" style="right:720px;top:785.9px;font-size:13.7px;color:#333;text-decoration:underline;text-underline-offset:2px">6</div>
<div class="t" style="right:675px;top:785.9px;font-size:13.7px;color:#c8c8c8;">0</div>
<div class="t" style="right:635px;top:785.9px;font-size:13.7px;color:#333;text-decoration:underline;text-underline-offset:2px">4</div>
<div class="t" style="left:1299.3px;top:785.9px;font-size:13.7px;color:#333;text-decoration:underline;text-underline-offset:2px;border-bottom:1px dotted #333;padding-bottom:0px">Title</div>
<div class="a" style="left:249px;top:808.64px;width:1670px;height:27.24px;background:#fff;"></div>
<div class="a" style="left:249px;top:834.88px;width:1670px;height:1px;background:#e4e4e4;"></div>
<div class="t" style="left:257px;top:813.14px;font-size:13.7px;color:#333;">Viewing</div>
<div class="t" style="left:1636.2px;top:813.14px;font-size:13.7px;color:#333;">No</div>
<div class="t" style="left:1775px;top:813.14px;font-size:13.7px;color:#333;">No</div>
<div class="t" style="left:939.3px;top:813.14px;font-size:13.7px;color:#333;">Custom</div>
<div class="t" style="left:1005.4px;top:813.14px;font-size:13.7px;color:#333;">viewing</div>
<div class="t" style="right:720px;top:813.14px;font-size:13.7px;color:#333;text-decoration:underline;text-underline-offset:2px">6</div>
<div class="t" style="right:675px;top:813.14px;font-size:13.7px;color:#c8c8c8;">0</div>
<div class="t" style="right:635px;top:813.14px;font-size:13.7px;color:#333;text-decoration:underline;text-underline-offset:2px">5</div>
<svg style="left:1564px;top:812.64px;" width="19" height="19" viewBox="0 0 19 19"><path d="M11 17H1.2V4.5L2.5 3H16.3L17.6 4.5V12" fill="#fff" stroke="#72aef0" stroke-width="1.6"/><rect x="2" y="3.6" width="15" height="2.2" fill="#7ad8f8"/><rect x="3.3" y="0.5" width="2" height="4" fill="#9a9a9a"/><rect x="12.3" y="0.5" width="2" height="4" fill="#9a9a9a"/><rect x="3.6" y="7.4" width="10.5" height="7.4" fill="#e4f0f4" stroke="#62c254" stroke-width="1.3"/><path d="M11 10.6H19L16 14V18.5L14 17.5V14Z" fill="#62c254"/></svg>
<div class="t" style="right:720px;top:840.38px;font-size:13.7px;color:#333;">74</div>
<div class="t" style="right:675px;top:840.38px;font-size:13.7px;color:#c8c8c8;">0</div>
<div class="t" style="right:635px;top:840.38px;font-size:13.7px;color:#333;">40</div>
<div class="a" style="left:249px;top:989px;width:1670px;height:30px;background:#efefef;border-top:1px solid #d0d0d0"></div>
<svg style="left:256px;top:997.5px;" width="14" height="15" viewBox="0 0 14 15"><rect x="0.5" y="0.5" width="2.5" height="14" fill="#c5cdf4" stroke="#9aa6e6" stroke-width="0.8"/><path d="M13 0.5V14.5L4.5 7.5Z" fill="#c5cdf4" stroke="#9aa6e6" stroke-width="0.8"/></svg>
<svg style="left:285px;top:998.5px;" width="9" height="13" viewBox="0 0 9 13"><path d="M8.5 0.5V12.5L0.5 6.5Z" fill="#c5cdf4" stroke="#9aa6e6" stroke-width="0.8"/></svg>
<div class="a" style="left:307px;top:997px;width:1px;height:17px;background:#d3d3d3;"></div>
<div class="t" style="left:318px;top:998.9px;font-size:13.7px;color:#333;">Page</div>
<div class="a" style="left:360px;top:994px;width:62px;height:22px;background:#fff;border:1px solid #cfcfcf"></div>
<div class="t" style="left:364px;top:997.4px;font-size:13.7px;color:#333;">1</div>
<div class="t" style="left:430px;top:998.9px;font-size:13.7px;color:#333;">of 1</div>
<div class="a" style="left:464px;top:997px;width:1px;height:17px;background:#d3d3d3;"></div>
<svg style="left:476px;top:998.5px;" width="9" height="13" viewBox="0 0 9 13"><path d="M0.5 0.5V12.5L8.5 6.5Z" fill="#9aabf0" stroke="#7d8fe6" stroke-width="0.8"/></svg>
<svg style="left:502px;top:997.5px;" width="14" height="15" viewBox="0 0 14 15"><path d="M0.5 0.5V14.5L9 7.5Z" fill="#9aabf0" stroke="#7d8fe6" stroke-width="0.8"/><rect x="10.5" y="0.5" width="2.5" height="14" fill="#9aabf0" stroke="#7d8fe6" stroke-width="0.8"/></svg>
<div class="a" style="left:525px;top:997px;width:1px;height:17px;background:#d3d3d3;"></div>
<svg style="left:533px;top:996.5px;" width="18" height="18" viewBox="0 0 18 18"><defs><linearGradient id="rf" x1="0" y1="0" x2="1" y2="1"><stop offset="0" stop-color="#a9c8f6"/><stop offset="0.5" stop-color="#7aa8f0"/><stop offset="1" stop-color="#4678dc"/></linearGradient></defs><path d="M3.6 8A6 6 0 0 1 14.2 4.6" fill="none" stroke="url(#rf)" stroke-width="3.4"/><path d="M17.8 2.3V9.6H10.5Z" fill="#5d8de6"/><path d="M14.4 10A6 6 0 0 1 3.8 13.4" fill="none" stroke="url(#rf)" stroke-width="3.4"/><path d="M0.2 15.7V8.4H7.5Z" fill="#9fc2f5"/></svg>
<div class="a" style="left:559px;top:997px;width:1px;height:17px;background:#d3d3d3;"></div>
<svg style="left:566px;top:997px;" width="19" height="17" viewBox="0 0 19 17"><defs><linearGradient id="xl" x1="0" y1="0" x2="1" y2="1"><stop offset="0" stop-color="#5aaa3a"/><stop offset="0.45" stop-color="#c4f59a"/><stop offset="1" stop-color="#3e9a2a"/></linearGradient></defs><path d="M16.5 1H12L2.3 13.5H7Z" fill="#55aa3a"/><path d="M1 1H6.8L18.3 15.5H12.5Z" fill="url(#xl)"/><path d="M9 7.5L13 7L11 10Z" fill="#4a9a35"/></svg>
<svg style="left:594px;top:996px;" width="18" height="18" viewBox="0 0 18 18"><path d="M1 1H3.6V12.5L6.3 11L1.3 17Z" fill="#7ccf5a"/><rect x="5.4" y="1.2" width="9.2" height="4.6" rx="0.8" fill="#fff" stroke="#5a95f0" stroke-width="1.4"/><rect x="5.4" y="5.8" width="12" height="4.6" rx="0.8" fill="#fff" stroke="#5a95f0" stroke-width="1.4"/></svg>
<div class="t" style="right:13.5px;top:999.7px;font-size:13.7px;color:#444;">Displaying 1 - 17 of 17</div>
<div class="a" style="left:483px;top:354px;width:952px;height:420px;background:#72b4ee;box-shadow:2px 5px 8px -3px rgba(0,0,0,0.35)"></div>
<div class="a" style="left:488px;top:384px;width:942px;height:385px;background:#fff;"></div>
<svg style="left:489.4px;top:361.2px;" width="17" height="17" viewBox="0 0 17 17"><rect x="0" y="0" width="17.4" height="16.2" rx="1.6" fill="#69a3f0"/><rect x="1.3" y="1.8" width="3.6" height="3" fill="#bdf0fb"/><rect x="6.2" y="1.8" width="9.6" height="3" fill="#bdf0fb"/><rect x="1.3" y="6.8" width="3.6" height="3.2" fill="#fff"/><rect x="6.2" y="6.8" width="9.6" height="3.2" fill="#fff"/><rect x="1.3" y="11.8" width="3.6" height="3.2" fill="#fff"/><rect x="6.2" y="11.8" width="9.6" height="3.2" fill="#fff"/></svg>
<div class="t" style="left:514.4px;top:362.12px;font-size:13.8px;color:#f4f6f8;">Fields in structure</div>
<svg style="left:634px;top:367px;" width="10" height="6" viewBox="0 0 10 6"><path d="M0 0H10L5 6Z" fill="#f4f6f8"/></svg>
<svg style="left:1355px;top:358.5px;" width="20" height="20" viewBox="0 0 20 20"><circle cx="10.0" cy="10.0" r="10.0" fill="#e1eefb"/><rect x="4.0" y="8.5" width="12" height="3" fill="#72b4ee"/></svg>
<svg style="left:1383px;top:358.5px;" width="20" height="20" viewBox="0 0 20 20"><circle cx="10.0" cy="10.0" r="10.0" fill="#e1eefb"/><path d="M7.0 5.6H14.8V12.9Z" fill="#72b4ee"/><path d="M5.2 7.7V15.2H12.5Z" fill="#72b4ee"/></svg>
<svg style="left:1410px;top:358.5px;" width="20" height="20" viewBox="0 0 20 20"><circle cx="10.0" cy="10.0" r="10.0" fill="#e1eefb"/><path d="M5.0 5.0L15.0 15.0M15.0 5.0L5.0 15.0" stroke="#72b4ee" stroke-width="2.2"/></svg>
<svg style="left:495px;top:391px;" width="18" height="18" viewBox="0 0 18 18"><defs><linearGradient id="ga" x1="0" y1="0" x2="0" y2="1"><stop offset="0" stop-color="#c2ecb0"/><stop offset="1" stop-color="#86c676"/></linearGradient></defs><rect x="0.5" y="0.5" width="17" height="17" fill="url(#ga)" stroke="#7fb86e"/><path d="M9 3.5V14.5M3.5 9H14.5" stroke="#fff" stroke-width="3.2"/></svg>
<svg style="left:528px;top:392px;" width="17" height="17" viewBox="0 0 17 17"><path d="M1.5 15.5 L3 11.5 L13 1.5 L15.5 4 L5.5 14 Z" fill="#8ed16c" stroke="#5aa546" stroke-width="1"/><path d="M1.5 15.5L3 13.5" stroke="#333" stroke-width="1.5"/></svg>
<svg style="left:561px;top:392px;" width="16" height="16" viewBox="0 0 16 16"><path d="M2.5 2.5L13.5 13.5M13.5 2.5L2.5 13.5" stroke="#e58a96" stroke-width="4"/><path d="M8 8L13.5 13.5M8 8L13.5 2.5" stroke="#d05a6a" stroke-width="2" opacity="0.5"/></svg>
<svg style="left:593px;top:391px;" width="15" height="18" viewBox="0 0 15 18"><path d="M1.5 9L7.5 3L13.5 9M1.5 16L7.5 10L13.5 16" fill="none" stroke="#6cc04a" stroke-width="3"/></svg>
<svg style="left:626px;top:391px;" width="15" height="18" viewBox="0 0 15 18"><path d="M1.5 2L7.5 8L13.5 2M1.5 9L7.5 15L13.5 9" fill="none" stroke="#6cc04a" stroke-width="3"/></svg>
<svg style="left:657px;top:392px;" width="18" height="17" viewBox="0 0 18 17"><defs><linearGradient id="su" x1="0" y1="0" x2="0" y2="1"><stop offset="0" stop-color="#b4f59c"/><stop offset="1" stop-color="#98e67e"/></linearGradient></defs><path d="M1 3.5 H4.8 V11 H13.2 V3.5 H17 V15.5 H1 Z" fill="url(#su)" stroke="#78d65c" stroke-width="1.2" stroke-linejoin="round"/><rect x="6.8" y="0.8" width="4.4" height="8" rx="0.6" fill="#ee9484" stroke="#d86050" stroke-width="0.9"/></svg>
<svg style="left:690px;top:391px;" width="18" height="18" viewBox="0 0 18 18"><path d="M1.5 10V16.5H16.5V10" fill="none" stroke="#38c040" stroke-width="3"/><path d="M9 0.5L14 6H11V11H7V6H4Z" fill="#1a9ae6"/></svg>
<div class="a" style="left:718px;top:392px;width:1px;height:18px;background:#d0d0d0;"></div>
<div class="a" style="left:724px;top:391px;width:490px;height:20px;background:#5889b3;"></div>
<div class="t" style="left:732.2px;top:394.07px;font-size:13.5px;color:#eef3f8;">Enumerated values</div>
<div class="t" style="left:861.5px;top:394.07px;font-size:13.5px;color:#eef3f8;">+</div>
<div class="t" style="left:887.5px;top:394.07px;font-size:13.5px;color:#eef3f8;">Resized copies</div>
<div class="t" style="left:989.5px;top:394.07px;font-size:13.5px;color:#eef3f8;">+</div>
<div class="t" style="left:1015.2px;top:394.07px;font-size:13.5px;color:#eef3f8;">Element-specific params</div>
<div class="t" style="left:1175.5px;top:394.07px;font-size:13.5px;color:#eef3f8;">+</div>
<svg style="left:1199px;top:394px;" width="11" height="13" viewBox="0 0 11 13"><path d="M0 1H11M0 4.7H11M0 8.3H11M0 12H11" stroke="#eef3f8" stroke-width="1.8"/></svg>
<div class="a" style="left:1302px;top:388px;width:125px;height:25px;background:#fff;border:1px solid #d0d0d0"></div>
<div class="t" style="left:1305.5px;top:392.65px;font-size:14px;color:#777;">Search...</div>
<div class="a" style="left:488px;top:417px;width:942px;height:80px;background:#efefef;"></div>
<div class="a" style="left:488px;top:417px;width:942px;height:1px;background:#d0d0d0;"></div>
<div class="a" style="left:488px;top:496px;width:942px;height:1px;background:#cfcfcf;"></div>
<div class="a" style="left:674px;top:418px;width:1px;height:78px;background:#d4d4d4;"></div>
<div class="a" style="left:789px;top:418px;width:1px;height:78px;background:#d4d4d4;"></div>
<div class="a" style="left:789px;top:443px;width:641px;height:1px;background:#d4d4d4;"></div>
<div class="a" style="left:827px;top:444px;width:1px;height:52px;background:#d4d4d4;"></div>
<div class="a" style="left:827px;top:470px;width:565px;height:1px;background:#d4d4d4;"></div>
<div class="a" style="left:1039px;top:444px;width:1px;height:52px;background:#d4d4d4;"></div>
<div class="a" style="left:1198px;top:444px;width:1px;height:52px;background:#d4d4d4;"></div>
<div class="a" style="left:1392px;top:444px;width:1px;height:52px;background:#d4d4d4;"></div>
<div class="a" style="left:864px;top:471px;width:1px;height:25px;background:#d4d4d4;"></div>
<div class="a" style="left:964px;top:471px;width:1px;height:25px;background:#d4d4d4;"></div>
<div class="a" style="left:1002px;top:471px;width:1px;height:25px;background:#d4d4d4;"></div>
<div class="a" style="left:1161px;top:471px;width:1px;height:25px;background:#d4d4d4;"></div>
<div class="a" style="left:1319px;top:471px;width:1px;height:25px;background:#d4d4d4;"></div>
<div class="t" style="left:496px;top:448.75px;font-size:14px;color:#3d1fe6;">Title</div>
<div class="t" style="left:683px;top:448.75px;font-size:14px;color:#3d1fe6;">Alias</div>
<div class="t" style="left:1112.5px;top:422.62px;font-size:13.8px;color:#444;transform:translateX(-50%);">Properties</div>
<div class="t" style="left:935.5px;top:450.32px;font-size:13.8px;color:#444;transform:translateX(-50%);">Foreign keys</div>
<div class="t" style="left:1120.8px;top:450.32px;font-size:13.8px;color:#444;transform:translateX(-50%);">Display</div>
<div class="t" style="left:1297.5px;top:450.32px;font-size:13.8px;color:#444;transform:translateX(-50%);">MySQL-column</div>
<div class="t" style="left:873px;top:476.85px;font-size:14px;color:#3d1fe6;">Entity</div>
<div class="t" style="left:1048px;top:476.85px;font-size:14px;color:#3d1fe6;">Element</div>
<div class="t" style="left:1207.2px;top:476.85px;font-size:14px;color:#3d1fe6;">Type</div>
<div class="t" style="left:1328.4px;top:477.19px;font-size:13.6px;color:#3d1fe6;letter-spacing:-0.5px">DEFAULT</div>
<svg style="left:800px;top:461px;" width="18" height="17" viewBox="0 0 18 17"><defs><linearGradient id="su" x1="0" y1="0" x2="0" y2="1"><stop offset="0" stop-color="#b4f59c"/><stop offset="1" stop-color="#98e67e"/></linearGradient></defs><path d="M1 3.5 H4.8 V11 H13.2 V3.5 H17 V15.5 H1 Z" fill="url(#su)" stroke="#78d65c" stroke-width="1.2" stroke-linejoin="round"/><rect x="6.8" y="0.8" width="4.4" height="8" rx="0.6" fill="#a8a8a8" stroke="#7a7a7a" stroke-width="0.9"/></svg>
<svg style="left:837px;top:475px;" width="18" height="20" viewBox="0 0 18 20"><g transform="translate(0,0)" opacity="0.9"><path d="M1 1.5H12.5V4.5L8.5 9V16.5L7 17.5L5 16V9L1 4.5Z" fill="#ecd79a" stroke="#c39a4c" stroke-width="1" stroke-linejoin="round"/><rect x="4" y="3.2" width="5.5" height="2" rx="1" fill="#f8f0d0" stroke="#c9a85a" stroke-width="0.6"/><path d="M8.5 11L10 12L8.5 13M8.5 14L10 15L8.5 16" fill="none" stroke="#c39a4c" stroke-width="0.8"/></g><g transform="translate(5,3)"><path d="M1 1.5H12.5V4.5L8.5 9V16.5L7 17.5L5 16V9L1 4.5Z" fill="#ecd79a" stroke="#c39a4c" stroke-width="1" stroke-linejoin="round"/><rect x="4" y="3.2" width="5.5" height="2" rx="1" fill="#f8f0d0" stroke="#c9a85a" stroke-width="0.6"/><path d="M8.5 11L10 12L8.5 13M8.5 14L10 15L8.5 16" fill="none" stroke="#c39a4c" stroke-width="0.8"/></g></svg>
<svg style="left:975px;top:475px;" width="19" height="18" viewBox="0 0 19 18"><path d="M0.5 0.5H18.5L11 9V17.5L7 15V9Z" fill="#8ed46a" stroke="#5aa546"/><path d="M12 13H18L15 16Z" fill="#4a8fe6"/></svg>
<svg style="left:1012.5px;top:475.5px;" width="19" height="18" viewBox="0 0 19 18"><rect x="4.8" y="6" width="13" height="10.8" rx="1" fill="#fff" stroke="#6cc95a" stroke-width="1.6"/><path d="M4.8 11.4H17.8" stroke="#6cc95a" stroke-width="1.6"/><rect x="0.8" y="0.8" width="13" height="6" rx="1" fill="#fff" stroke="#e4605a" stroke-width="1.6"/></svg>
<svg style="left:1172px;top:476px;" width="19" height="16" viewBox="0 0 19 16"><rect x="1" y="4" width="17" height="11" fill="none" stroke="#5cc24a" stroke-width="1.6"/><path d="M7 4L9.5 1L12 4" fill="none" stroke="#5cc24a" stroke-width="1.4"/></svg>
<svg style="left:1402px;top:461px;" width="20" height="19" viewBox="0 0 20 19"><rect x="11" y="3.2" width="8" height="15" fill="#dadada"/><path d="M1.5 0.8H10L12 4.5L15.5 15.3H1.5Z" fill="#6a8ef0" stroke="#6a8ef0" stroke-width="1" stroke-linejoin="round"/><path d="M12.2 15.3H15.6L13.3 18.8Z" fill="#4a4ab8"/><path d="M9.5 7.3A3 3 0 1 0 9.6 10.8H7.5" fill="none" stroke="#fff" stroke-width="1.3"/><path d="M16.5 5V6.5M14 7.3H19M14.5 7.5L18.5 12.5M18.5 7.5L15 12" stroke="#5a6670" stroke-width="0.9"/></svg>
<div class="a" style="left:488px;top:497.4px;width:942px;height:27.13px;background:#fff;"></div>
<div class="a" style="left:488px;top:523.53px;width:942px;height:1px;background:#e4e4e4;"></div>
<div class="t" style="left:495.7px;top:501.8px;font-size:13.7px;color:#333;">Property address</div>
<div class="t" style="left:683px;top:501.8px;font-size:13.7px;color:#333;">address</div>
<svg style="left:801px;top:500.4px;" width="18" height="17" viewBox="0 0 18 17"><defs><linearGradient id="su" x1="0" y1="0" x2="0" y2="1"><stop offset="0" stop-color="#b4f59c"/><stop offset="1" stop-color="#98e67e"/></linearGradient></defs><path d="M1 3.5 H4.8 V11 H13.2 V3.5 H17 V15.5 H1 Z" fill="url(#su)" stroke="#78d65c" stroke-width="1.2" stroke-linejoin="round"/><rect x="6.8" y="0.8" width="4.4" height="8" rx="0.6" fill="#ee9484" stroke="#d86050" stroke-width="0.9"/></svg>
<div class="t" style="left:1048px;top:501.8px;font-size:13.7px;color:#333;text-decoration:underline;text-underline-offset:2px">String</div>
<div class="t" style="left:1206.6px;top:501.8px;font-size:13.7px;color:#333;text-decoration:underline;text-underline-offset:2px;letter-spacing:-0.45px">VARCHAR(255)</div>
<div class="a" style="left:1403px;top:501.9px;width:17px;height:13px;background:#d4d4d4;"></div>
<div class="a" style="left:488px;top:524.53px;width:942px;height:27.13px;background:#f5f5f5;"></div>
<div class="a" style="left:488px;top:550.66px;width:942px;height:1px;background:#e4e4e4;"></div>
<div class="t" style="left:495.7px;top:528.93px;font-size:13.7px;color:#333;">Description</div>
<div class="t" style="left:683px;top:528.93px;font-size:13.7px;color:#333;">description</div>
<svg style="left:801px;top:527.53px;" width="18" height="17" viewBox="0 0 18 17"><defs><linearGradient id="su" x1="0" y1="0" x2="0" y2="1"><stop offset="0" stop-color="#b4f59c"/><stop offset="1" stop-color="#98e67e"/></linearGradient></defs><path d="M1 3.5 H4.8 V11 H13.2 V3.5 H17 V15.5 H1 Z" fill="url(#su)" stroke="#78d65c" stroke-width="1.2" stroke-linejoin="round"/><rect x="6.8" y="0.8" width="4.4" height="8" rx="0.6" fill="#a8a8a8" stroke="#7a7a7a" stroke-width="0.9"/></svg>
<div class="a" style="left:837.5px;top:530.03px;width:17px;height:14px;background:#fff;"></div>
<div class="a" style="left:1012.6px;top:530.03px;width:17px;height:14px;background:#fff;"></div>
<div class="t" style="left:1048px;top:528.93px;font-size:13.7px;color:#333;text-decoration:underline;text-underline-offset:2px">Text</div>
<div class="t" style="left:1206.6px;top:528.93px;font-size:13.7px;color:#333;text-decoration:underline;text-underline-offset:2px;letter-spacing:-0.45px">TEXT</div>
<div class="a" style="left:1403px;top:529.03px;width:17px;height:13px;background:#d4d4d4;"></div>
<div class="a" style="left:488px;top:551.66px;width:942px;height:27.13px;background:#fff;"></div>
<div class="a" style="left:488px;top:577.79px;width:942px;height:1px;background:#e4e4e4;"></div>
<div class="t" style="left:495.7px;top:556.06px;font-size:13.7px;color:#333;">Price</div>
<div class="t" style="left:683px;top:556.06px;font-size:13.7px;color:#333;">price</div>
<svg style="left:801px;top:554.66px;" width="18" height="17" viewBox="0 0 18 17"><defs><linearGradient id="su" x1="0" y1="0" x2="0" y2="1"><stop offset="0" stop-color="#b4f59c"/><stop offset="1" stop-color="#98e67e"/></linearGradient></defs><path d="M1 3.5 H4.8 V11 H13.2 V3.5 H17 V15.5 H1 Z" fill="url(#su)" stroke="#78d65c" stroke-width="1.2" stroke-linejoin="round"/><rect x="6.8" y="0.8" width="4.4" height="8" rx="0.6" fill="#a8a8a8" stroke="#7a7a7a" stroke-width="0.9"/></svg>
<div class="t" style="left:1048px;top:556.06px;font-size:13.7px;color:#333;text-decoration:underline;text-underline-offset:2px">Price</div>
<div class="t" style="left:1206.6px;top:556.06px;font-size:13.7px;color:#333;text-decoration:underline;text-underline-offset:2px;letter-spacing:-0.45px">DECIMAL(13,2)</div>
<div class="t" style="left:1328px;top:556.06px;font-size:13.7px;color:#333;">0</div>
<div class="a" style="left:1403px;top:556.16px;width:17px;height:13px;background:#d4d4d4;"></div>
<div class="a" style="left:488px;top:578.79px;width:942px;height:27.13px;background:#e3fbdc;"></div>
<div class="a" style="left:488px;top:604.92px;width:942px;height:1px;background:#e4e4e4;"></div>
<div class="t" style="left:495.7px;top:583.19px;font-size:13.7px;color:#333;">Property type</div>
<div class="t" style="left:683px;top:583.19px;font-size:13.7px;color:#333;">propertyTypeId</div>
<svg style="left:801px;top:581.79px;" width="18" height="17" viewBox="0 0 18 17"><defs><linearGradient id="su" x1="0" y1="0" x2="0" y2="1"><stop offset="0" stop-color="#b4f59c"/><stop offset="1" stop-color="#98e67e"/></linearGradient></defs><path d="M1 3.5 H4.8 V11 H13.2 V3.5 H17 V15.5 H1 Z" fill="url(#su)" stroke="#78d65c" stroke-width="1.2" stroke-linejoin="round"/><rect x="6.8" y="0.8" width="4.4" height="8" rx="0.6" fill="#ee9484" stroke="#d86050" stroke-width="0.9"/></svg>
<svg style="left:840.5px;top:581.79px;" width="18" height="20" viewBox="0 0 18 20"><path d="M1 1.5H12.5V4.5L8.5 9V16.5L7 17.5L5 16V9L1 4.5Z" fill="#ecd79a" stroke="#c39a4c" stroke-width="1" stroke-linejoin="round"/><rect x="4" y="3.2" width="5.5" height="2" rx="1" fill="#f8f0d0" stroke="#c9a85a" stroke-width="0.6"/><path d="M8.5 11L10 12L8.5 13M8.5 14L10 15L8.5 16" fill="none" stroke="#c39a4c" stroke-width="0.8"/></svg>
<div class="t" style="left:873px;top:583.19px;font-size:13.7px;color:#333;text-decoration:underline;text-underline-offset:2px;border-bottom:1px dotted #333;padding-bottom:1px">Property type</div>
<svg style="left:1012.5px;top:582.0899999999999px;" width="19" height="18" viewBox="0 0 19 18"><rect x="4.8" y="6" width="13" height="10.8" rx="1" fill="#fff" stroke="#6cc95a" stroke-width="1.6"/><path d="M4.8 11.4H17.8" stroke="#6cc95a" stroke-width="1.6"/><rect x="0.8" y="0.8" width="13" height="6" rx="1" fill="#fff" stroke="#6cc95a" stroke-width="1.6"/><rect x="0.2" y="9" width="1.8" height="5" fill="#e4705f"/><rect x="0.2" y="15" width="1.8" height="1.8" fill="#e4907f"/></svg>
<div class="t" style="left:1048px;top:583.19px;font-size:13.7px;color:#333;text-decoration:underline;text-underline-offset:2px">Combo</div>
<div class="t" style="left:1206.6px;top:583.19px;font-size:13.7px;color:#333;text-decoration:underline;text-underline-offset:2px;letter-spacing:-0.45px">INT(11)</div>
<div class="t" style="left:1328px;top:583.19px;font-size:13.7px;color:#333;">0</div>
<div class="a" style="left:1403px;top:583.29px;width:17px;height:13px;background:#d4d4d4;"></div>
<div class="a" style="left:488px;top:605.92px;width:942px;height:27.13px;background:#fff;"></div>
<div class="a" style="left:488px;top:632.05px;width:942px;height:1px;background:#e4e4e4;"></div>
<div class="t" style="left:495.7px;top:610.32px;font-size:13.7px;color:#333;">Location</div>
<div class="t" style="left:683px;top:610.32px;font-size:13.7px;color:#333;">locationId</div>
<svg style="left:801px;top:608.92px;" width="18" height="17" viewBox="0 0 18 17"><defs><linearGradient id="su" x1="0" y1="0" x2="0" y2="1"><stop offset="0" stop-color="#b4f59c"/><stop offset="1" stop-color="#98e67e"/></linearGradient></defs><path d="M1 3.5 H4.8 V11 H13.2 V3.5 H17 V15.5 H1 Z" fill="url(#su)" stroke="#78d65c" stroke-width="1.2" stroke-linejoin="round"/><rect x="6.8" y="0.8" width="4.4" height="8" rx="0.6" fill="#ee9484" stroke="#d86050" stroke-width="0.9"/></svg>
<svg style="left:840.5px;top:608.92px;" width="18" height="20" viewBox="0 0 18 20"><path d="M1 1.5H12.5V4.5L8.5 9V16.5L7 17.5L5 16V9L1 4.5Z" fill="#ecd79a" stroke="#c39a4c" stroke-width="1" stroke-linejoin="round"/><rect x="4" y="3.2" width="5.5" height="2" rx="1" fill="#f8f0d0" stroke="#c9a85a" stroke-width="0.6"/><path d="M8.5 11L10 12L8.5 13M8.5 14L10 15L8.5 16" fill="none" stroke="#c39a4c" stroke-width="0.8"/></svg>
<div class="t" style="left:873px;top:610.32px;font-size:13.7px;color:#333;text-decoration:underline;text-underline-offset:2px;border-bottom:1px dotted #333;padding-bottom:1px">Location</div>
<svg style="left:1012.5px;top:609.2199999999999px;" width="19" height="18" viewBox="0 0 19 18"><rect x="4.8" y="6" width="13" height="10.8" rx="1" fill="#fff" stroke="#6cc95a" stroke-width="1.6"/><path d="M4.8 11.4H17.8" stroke="#6cc95a" stroke-width="1.6"/><rect x="0.8" y="0.8" width="13" height="6" rx="1" fill="#fff" stroke="#6cc95a" stroke-width="1.6"/><rect x="0.2" y="9" width="1.8" height="5" fill="#e4705f"/><rect x="0.2" y="15" width="1.8" height="1.8" fill="#e4907f"/></svg>
<div class="t" style="left:1048px;top:610.32px;font-size:13.7px;color:#333;text-decoration:underline;text-underline-offset:2px">Combo</div>
<div class="t" style="left:1206.6px;top:610.32px;font-size:13.7px;color:#333;text-decoration:underline;text-underline-offset:2px;letter-spacing:-0.45px">INT(11)</div>
<div class="t" style="left:1328px;top:610.32px;font-size:13.7px;color:#333;">0</div>
<div class="a" style="left:1403px;top:610.42px;width:17px;height:13px;background:#d4d4d4;"></div>
<div class="a" style="left:488px;top:633.05px;width:942px;height:27.13px;background:#f5f5f5;"></div>
<div class="a" style="left:488px;top:659.18px;width:942px;height:1px;background:#e4e4e4;"></div>
<div class="t" style="left:495.7px;top:637.45px;font-size:13.7px;color:#333;">Photo</div>
<div class="t" style="left:683px;top:637.45px;font-size:13.7px;color:#333;">photo</div>
<svg style="left:801px;top:636.05px;" width="18" height="17" viewBox="0 0 18 17"><defs><linearGradient id="su" x1="0" y1="0" x2="0" y2="1"><stop offset="0" stop-color="#b4f59c"/><stop offset="1" stop-color="#98e67e"/></linearGradient></defs><path d="M1 3.5 H4.8 V11 H13.2 V3.5 H17 V15.5 H1 Z" fill="url(#su)" stroke="#78d65c" stroke-width="1.2" stroke-linejoin="round"/><rect x="6.8" y="0.8" width="4.4" height="8" rx="0.6" fill="#a8a8a8" stroke="#7a7a7a" stroke-width="0.9"/></svg>
<div class="a" style="left:837.5px;top:638.55px;width:17px;height:14px;background:#fff;"></div>
<div class="a" style="left:1012.6px;top:638.55px;width:17px;height:14px;background:#fff;"></div>
<div class="t" style="left:1048px;top:637.45px;font-size:13.7px;color:#333;text-decoration:underline;text-underline-offset:2px">File-upload panel</div>
<div class="a" style="left:1403px;top:637.55px;width:17px;height:13px;background:#d4d4d4;"></div>
<div class="a" style="left:488px;top:660.18px;width:942px;height:27.13px;background:#fff;"></div>
<div class="a" style="left:488px;top:686.31px;width:942px;height:1px;background:#e4e4e4;"></div>
<div class="t" style="left:495.7px;top:664.58px;font-size:13.7px;color:#333;">Agent</div>
<div class="t" style="left:683px;top:664.58px;font-size:13.7px;color:#333;">agentId</div>
<svg style="left:801px;top:663.18px;" width="18" height="17" viewBox="0 0 18 17"><defs><linearGradient id="su" x1="0" y1="0" x2="0" y2="1"><stop offset="0" stop-color="#b4f59c"/><stop offset="1" stop-color="#98e67e"/></linearGradient></defs><path d="M1 3.5 H4.8 V11 H13.2 V3.5 H17 V15.5 H1 Z" fill="url(#su)" stroke="#78d65c" stroke-width="1.2" stroke-linejoin="round"/><rect x="6.8" y="0.8" width="4.4" height="8" rx="0.6" fill="#ee9484" stroke="#d86050" stroke-width="0.9"/></svg>
<svg style="left:840.5px;top:663.18px;" width="18" height="20" viewBox="0 0 18 20"><path d="M1 1.5H12.5V4.5L8.5 9V16.5L7 17.5L5 16V9L1 4.5Z" fill="#ecd79a" stroke="#c39a4c" stroke-width="1" stroke-linejoin="round"/><rect x="4" y="3.2" width="5.5" height="2" rx="1" fill="#f8f0d0" stroke="#c9a85a" stroke-width="0.6"/><path d="M8.5 11L10 12L8.5 13M8.5 14L10 15L8.5 16" fill="none" stroke="#c39a4c" stroke-width="0.8"/></svg>
<div class="t" style="left:873px;top:664.58px;font-size:13.7px;color:#333;text-decoration:underline;text-underline-offset:2px;border-bottom:1px dotted #333;padding-bottom:1px">Agent</div>
<svg style="left:1012.5px;top:663.4799999999999px;" width="19" height="18" viewBox="0 0 19 18"><rect x="4.8" y="6" width="13" height="10.8" rx="1" fill="#fff" stroke="#6cc95a" stroke-width="1.6"/><path d="M4.8 11.4H17.8" stroke="#6cc95a" stroke-width="1.6"/><rect x="0.8" y="0.8" width="13" height="6" rx="1" fill="#fff" stroke="#6cc95a" stroke-width="1.6"/><rect x="0.2" y="9" width="1.8" height="5" fill="#e4705f"/><rect x="0.2" y="15" width="1.8" height="1.8" fill="#e4907f"/></svg>
<div class="t" style="left:1048px;top:664.58px;font-size:13.7px;color:#333;text-decoration:underline;text-underline-offset:2px">Combo</div>
<div class="t" style="left:1206.6px;top:664.58px;font-size:13.7px;color:#333;text-decoration:underline;text-underline-offset:2px;letter-spacing:-0.45px">INT(11)</div>
<div class="t" style="left:1328px;top:664.58px;font-size:13.7px;color:#333;">0</div>
<div class="a" style="left:1403px;top:664.68px;width:17px;height:13px;background:#d4d4d4;"></div>
<div class="a" style="left:675px;top:577.6px;width:114px;height:28px;background:transparent;border:1.3px dotted #2a2ad0"></div>
<div class="a" style="left:488px;top:738px;width:942px;height:31px;background:#efefef;border-top:1px solid #d0d0d0"></div>
<svg style="left:495px;top:747.0px;" width="14" height="15" viewBox="0 0 14 15"><rect x="0.5" y="0.5" width="2.5" height="14" fill="#c5cdf4" stroke="#9aa6e6" stroke-width="0.8"/><path d="M13 0.5V14.5L4.5 7.5Z" fill="#c5cdf4" stroke="#9aa6e6" stroke-width="0.8"/></svg>
<svg style="left:524px;top:748.0px;" width="9" height="13" viewBox="0 0 9 13"><path d="M8.5 0.5V12.5L0.5 6.5Z" fill="#c5cdf4" stroke="#9aa6e6" stroke-width="0.8"/></svg>
<div class="a" style="left:546px;top:746.5px;width:1px;height:17px;background:#d3d3d3;"></div>
<div class="t" style="left:557px;top:748.4px;font-size:13.7px;color:#333;">Page</div>
<div class="a" style="left:599px;top:743.5px;width:62px;height:22px;background:#fff;border:1px solid #cfcfcf"></div>
<div class="t" style="left:603px;top:746.9px;font-size:13.7px;color:#333;">1</div>
<div class="t" style="left:669px;top:748.4px;font-size:13.7px;color:#333;">of 1</div>
<div class="a" style="left:703px;top:746.5px;width:1px;height:17px;background:#d3d3d3;"></div>
<svg style="left:715px;top:748.0px;" width="9" height="13" viewBox="0 0 9 13"><path d="M0.5 0.5V12.5L8.5 6.5Z" fill="#9aabf0" stroke="#7d8fe6" stroke-width="0.8"/></svg>
<svg style="left:741px;top:747.0px;" width="14" height="15" viewBox="0 0 14 15"><path d="M0.5 0.5V14.5L9 7.5Z" fill="#9aabf0" stroke="#7d8fe6" stroke-width="0.8"/><rect x="10.5" y="0.5" width="2.5" height="14" fill="#9aabf0" stroke="#7d8fe6" stroke-width="0.8"/></svg>
<div class="a" style="left:764px;top:746.5px;width:1px;height:17px;background:#d3d3d3;"></div>
<svg style="left:772px;top:746.0px;" width="18" height="18" viewBox="0 0 18 18"><defs><linearGradient id="rf" x1="0" y1="0" x2="1" y2="1"><stop offset="0" stop-color="#a9c8f6"/><stop offset="0.5" stop-color="#7aa8f0"/><stop offset="1" stop-color="#4678dc"/></linearGradient></defs><path d="M3.6 8A6 6 0 0 1 14.2 4.6" fill="none" stroke="url(#rf)" stroke-width="3.4"/><path d="M17.8 2.3V9.6H10.5Z" fill="#5d8de6"/><path d="M14.4 10A6 6 0 0 1 3.8 13.4" fill="none" stroke="url(#rf)" stroke-width="3.4"/><path d="M0.2 15.7V8.4H7.5Z" fill="#9fc2f5"/></svg>
<div class="a" style="left:798px;top:746.5px;width:1px;height:17px;background:#d3d3d3;"></div>
<svg style="left:805px;top:746.5px;" width="19" height="17" viewBox="0 0 19 17"><defs><linearGradient id="xl" x1="0" y1="0" x2="1" y2="1"><stop offset="0" stop-color="#5aaa3a"/><stop offset="0.45" stop-color="#c4f59a"/><stop offset="1" stop-color="#3e9a2a"/></linearGradient></defs><path d="M16.5 1H12L2.3 13.5H7Z" fill="#55aa3a"/><path d="M1 1H6.8L18.3 15.5H12.5Z" fill="url(#xl)"/><path d="M9 7.5L13 7L11 10Z" fill="#4a9a35"/></svg>
<svg style="left:833px;top:745.5px;" width="18" height="18" viewBox="0 0 18 18"><path d="M1 1H3.6V12.5L6.3 11L1.3 17Z" fill="#7ccf5a"/><rect x="5.4" y="1.2" width="9.2" height="4.6" rx="0.8" fill="#fff" stroke="#5a95f0" stroke-width="1.4"/><rect x="5.4" y="5.8" width="12" height="4.6" rx="0.8" fill="#fff" stroke="#5a95f0" stroke-width="1.4"/></svg>
<div class="t" style="right:503px;top:749.2px;font-size:13.7px;color:#444;">Displaying 1 - 7 of 7</div>
<div class="a" style="left:1139px;top:351.5px;width:5px;height:3px;background:#5a9ee8;"></div>
<div class="a" style="left:1299px;top:773.8px;width:26px;height:1.5px;background:transparent;border-top:1.5px dotted #333"></div>
<div class="a" style="left:897px;top:615px;width:159px;height:30px;background:#777;box-shadow:2px 3px 6px rgba(0,0,0,0.3)"></div>
<div class="t" style="left:906px;top:621.82px;font-size:13.8px;color:#f8f8f8;">DB table: propertyType</div>
<svg style="left:896.8px;top:591px;" width="19" height="25" viewBox="0 0 19 25"><path d="M6 2.2 C6 0.6 8.8 0.6 8.8 2.2 V9.5 C8.8 8.2 11.4 8.2 11.4 9.5 V10.5 C11.4 9.3 14 9.3 14 10.5 V11.5 C14 10.4 16.6 10.4 16.6 11.5 V17.5 C16.6 20 15.6 21.8 14.3 23.5 H7 L1.6 16.8 C0.4 15.2 2.4 13.4 4.1 14.8 L6 16.6 Z" fill="#fff" stroke="#000" stroke-width="1.5" stroke-linejoin="round"/><path d="M8.8 10V14.5M11.4 10.5V14.5M14 11.5V14.5" stroke="#000" stroke-width="1.1"/></svg>
<div class="a" style="left:12px;top:883px;width:375px;height:28px;background:rgba(76,135,183,0.71);"></div>
<div class="t" style="left:199px;top:889.22px;font-size:15.1px;color:#fafcff;transform:translateX(-50%);">Hide all</div>
<div class="a" style="left:12px;top:913px;width:375px;height:28px;background:rgba(76,135,183,0.71);"></div>
<div class="t" style="left:17px;top:919.72px;font-size:15.1px;color:#fafcff;">Preparing background process</div>
<svg style="left:372px;top:918.5px;" width="10" height="10" viewBox="0 0 10 10"><path d="M1 1L9 9M9 1L1 9" stroke="#fff" stroke-width="2.6"/></svg>
<div class="a" style="left:12px;top:943.3px;width:375px;height:28px;background:rgba(76,135,183,0.71);"></div>
<div class="t" style="left:17px;top:950.02px;font-size:15.1px;color:#fafcff;">Getting app design from AI model - done in 00:56</div>
<svg style="left:372px;top:948.8px;" width="10" height="10" viewBox="0 0 10 10"><path d="M1 1L9 9M9 1L1 9" stroke="#fff" stroke-width="2.6"/></svg>
<div class="a" style="left:12px;top:973px;width:375px;height:34.5px;background:rgba(76,135,183,0.71);"></div>
<div class="t" style="left:17px;top:979.72px;font-size:15.1px;color:#fafcff;">Importing app design: 44%</div>
<svg style="left:372px;top:978.5px;" width="10" height="10" viewBox="0 0 10 10"><path d="M1 1L9 9M9 1L1 9" stroke="#fff" stroke-width="2.6"/></svg>
<div class="a" style="left:17px;top:1001px;width:364px;height:2px;background:rgba(255,255,255,0.45);"></div>
<div class="a" style="left:17px;top:1001px;width:163px;height:2.2px;background:#fff;"></div>
<div class="a" style="left:0px;top:1019px;width:1919px;height:60px;background:linear-gradient(90deg,#232828 0%,#272629 6%,#28262a 14%,#2b2a1d 17%,#262a19 21%,#252a1c 26%,#232628 28.5%,#1a2a37 32%,#1c2a2f 38%,#1c2a2d 55%,#1b2d2c 70%,#1e2c2a 82%,#2a2a1f 100%);"></div>
<svg style="left:642px;top:1035px;" width="30" height="29" viewBox="0 0 30 29"><defs><linearGradient id="wl" x1="0" y1="0" x2="1" y2="1"><stop offset="0" stop-color="#7fe3fb"/><stop offset="1" stop-color="#1a9df0"/></linearGradient></defs><rect x="0" y="0" width="14" height="14" rx="1.5" fill="url(#wl)"/><rect x="15.5" y="0" width="14" height="14" rx="1.5" fill="url(#wl)"/><rect x="0" y="15.5" width="14" height="14" rx="1.5" fill="url(#wl)"/><rect x="15.5" y="15.5" width="14" height="14" rx="1.5" fill="url(#wl)"/></svg>
<div class="a" style="left:688px;top:1024px;width:50px;height:49px;background:rgba(255,255,255,0.07);border-radius:6px;border:1px solid rgba(255,255,255,0.06)"></div>
<svg style="left:698px;top:1034px;" width="30" height="30" viewBox="0 0 30 30"><circle cx="15" cy="15" r="15" fill="#db4437"/><path d="M15 15 L28 7.5 A15 15 0 0 1 15 30Z" fill="#fbc02d"/><path d="M15 15 L15 30 A15 15 0 0 1 2 7.5Z" fill="#0f9d58"/><path d="M15 15 L2 7.5 A15 15 0 0 1 28 7.5Z" fill="#db4437"/><circle cx="15" cy="15" r="7" fill="#fff"/><circle cx="15" cy="15" r="5.5" fill="#4285f4"/></svg>
<div class="a" style="left:703px;top:1069px;width:20px;height:3.5px;background:#5fb6f2;border-radius:2px"></div>
<svg style="left:753px;top:1034px;" width="29" height="29" viewBox="0 0 29 29"><rect x="0.5" y="0.5" width="27.5" height="23.5" fill="#0010b8" stroke="#22e6f6" stroke-width="1"/><path d="M14.25 1V24M10 1V24M24.5 1V24M1 20.5H28" stroke="#22e6f6" stroke-width="0.8"/><path d="M4 2.2H8M11 2.2H13M16.5 2.2H20.5M25.5 2.2H27" stroke="#f0c030" stroke-width="1"/><path d="M2.5 5H8.5M2.5 7H8.5M2.5 9H8.5M2.5 11.5H8.5M2.5 13.5H8.5M11 5H13M11 7H13M11 9H13M11 11.5H13M16 5H21M16 7H21M25.5 5H27M25.5 7H27" stroke="#7fd8f0" stroke-width="0.9"/><path d="M2 27.3H27" stroke="#0a9a9a" stroke-width="2" stroke-dasharray="3 1.6"/></svg>
<svg style="left:809px;top:1034px;" width="29" height="29" viewBox="0 0 29 29"><circle cx="14" cy="14.4" r="14" fill="#f1f1f1"/><g stroke-linecap="round" stroke-width="3.4"><path d="M5.5 12H11.3" stroke="#36c5f0"/><path d="M10.8 6.2V6.4" stroke="#36c5f0"/><path d="M16.8 6V12" stroke="#2eb67d"/><path d="M22 11.8V12" stroke="#2eb67d"/><path d="M10.8 17V22.8" stroke="#e01e5a"/><path d="M5.5 17.3V17.5" stroke="#e01e5a"/><path d="M16.8 17.5H22.3" stroke="#ecb22e"/><path d="M16.8 22.6V22.8" stroke="#ecb22e"/></g></svg>
<svg style="left:863px;top:1034px;" width="30" height="30" viewBox="0 0 30 30"><path d="M4 2L14 0.5L20 3L26 2.5L29 11L28.5 24L20 29.5L12 26L3 22L1 11Z" fill="#a04ee8"/><path d="M1 7L6 1.5L14 0.5L16 7Z" fill="#f03ab8"/><path d="M20 28L28.5 24L29 14L22 20Z" fill="#7a5af0"/><rect x="6.3" y="5.5" width="17.5" height="17.5" fill="#000"/><path d="M8.8 15.5V8.2H11.3Q13.2 8.2 13.2 10.1Q13.2 12 11.3 12H8.8" fill="none" stroke="#fff" stroke-width="1.6"/><path d="M19.7 9Q18.8 8.2 17.3 8.2Q15.3 8.2 15.3 9.9Q15.3 11.3 17.5 11.8Q19.9 12.3 19.9 13.9Q19.9 15.6 17.6 15.6Q15.9 15.6 15 14.6" fill="none" stroke="#fff" stroke-width="1.5"/><rect x="8.5" y="19.2" width="6.5" height="1.3" fill="#e8e8e8"/></svg>
<svg style="left:920px;top:1034px;" width="26" height="30" viewBox="0 0 26 30"><path d="M18.5 2.5Q17 4.5 17.5 6.5Q23.5 9.5 24 15.5Q24.5 22 19 25.5Q17 27 18 29.5Q14.5 29 14.5 26Q13 25 15 23Q19 20 18.5 16.5Q17.5 13.5 14.5 13Q16 16 13 17Q12.5 15 10 14Q5.5 15 1 16Q2.5 13.5 5.5 12Q8.5 6 14 5Q15.5 3 18.5 2.5Z" fill="#3b8cf0"/></svg>
<svg style="left:973px;top:1034px;" width="31" height="30" viewBox="0 0 31 30"><path d="M1 1H9L6 4L10 8L8 10L4 6L1 9Z" fill="#36a6f0"/><path d="M9 9Q9 4 14 4Q19 4 19 9V12" fill="none" stroke="#ddd" stroke-width="2.4"/><rect x="6" y="12" width="16" height="11" rx="1.5" fill="#c8c8c8"/><path d="M30 29H22L25 26L20 21L23 18L28 23L30 21Z" fill="#6ad040"/></svg>
<svg style="left:1030px;top:1035px;" width="27" height="26" viewBox="0 0 27 26"><rect x="1" y="1" width="25" height="24" rx="4" fill="#001e36" stroke="#31a8ff" stroke-width="2"/><text x="5" y="18" font-size="13" font-weight="bold" font-family="Liberation Sans" fill="#cfe8ff">Ps</text></svg>
<svg style="left:1083px;top:1034px;" width="31" height="30" viewBox="0 0 31 30"><path d="M15.5 0L31 15L15.5 30L0 15Z" fill="#7ab0f0"/><path d="M15.5 0L23 7.5L15.5 15L8 7.5Z" fill="#f07070"/><path d="M23 7.5L31 15L23 22.5L15.5 15Z" fill="#6cc050"/><path d="M15.5 15L23 22.5L15.5 30L8 22.5Z" fill="#f0d870"/><path d="M15 6V24M15 15L21 19" stroke="#222" stroke-width="1.6"/><circle cx="15" cy="24" r="2" fill="#222"/><circle cx="21" cy="19" r="2" fill="#222"/></svg>
<svg style="left:1141px;top:1034px;" width="24" height="30" viewBox="0 0 24 30"><rect x="0.5" y="0.5" width="23" height="29" rx="2" fill="#6a7480"/><rect x="3" y="3" width="18" height="5" fill="#4ac0f0"/><g fill="#dde3ea"><rect x="3" y="10" width="5" height="4"/><rect x="9.5" y="10" width="5" height="4"/><rect x="16" y="10" width="5" height="4"/><rect x="3" y="16" width="5" height="4"/><rect x="9.5" y="16" width="5" height="4"/><rect x="3" y="22" width="5" height="4"/><rect x="9.5" y="22" width="5" height="4"/></g><rect x="16" y="16" width="5" height="10" fill="#1a4a90"/></svg>
<svg style="left:1193px;top:1034px;" width="30" height="25" viewBox="0 0 30 25"><rect x="0.5" y="1" width="29" height="18" fill="#f4f4f4" stroke="#9a9a9a"/><path d="M11 8V9M19 8V9M11 11Q15 14 19 11" stroke="#777" stroke-width="0.8" fill="none"/><rect x="13" y="19" width="4" height="3" fill="#888"/><rect x="9" y="22" width="12" height="1.8" fill="#888"/></svg>
<div class="a" style="left:1205px;top:1069px;width:8px;height:4px;background:#888;border-radius:2px"></div>
<svg style="left:1248px;top:1034px;" width="30" height="30" viewBox="0 0 30 30"><rect x="13" y="1" width="13" height="11" fill="#eee" stroke="#666"/><rect x="15" y="3" width="9" height="7" fill="#1a2ab0"/><rect x="11" y="13" width="18" height="4" fill="#ddd" stroke="#666"/><rect x="4" y="14" width="13" height="11" fill="#eee" stroke="#666"/><rect x="6" y="16" width="9" height="7" fill="#1a2ab0"/><rect x="1" y="25" width="19" height="4.5" fill="#ddd" stroke="#666"/><path d="M20 5L11 17L16 16L9 26L20 13L15 14Z" fill="#f8e030" stroke="#333" stroke-width="0.5"/></svg>
<div class="a" style="left:1259px;top:1069px;width:8px;height:4px;background:#888;border-radius:2px"></div>
<svg style="left:1600px;top:1044px;" width="16" height="10" viewBox="0 0 16 10"><path d="M1 9L8 2L15 9" fill="none" stroke="#f0f0f0" stroke-width="1.8"/></svg>
<div class="t" style="left:1642px;top:1043.48px;font-size:14.2px;color:#f4f4f4;">ENG</div>
<svg style="left:1693px;top:1040px;" width="21" height="17" viewBox="0 0 21 17"><path d="M1 6Q10.5 -2 20 6M4 9.5Q10.5 3.5 17 9.5M7 13Q10.5 10 14 13" fill="none" stroke="#f0f0f0" stroke-width="1.7"/><circle cx="10.5" cy="15.5" r="1.5" fill="#f0f0f0"/></svg>
<svg style="left:1722px;top:1040px;" width="22" height="17" viewBox="0 0 22 17"><path d="M1 6H5L10 1.5V15.5L5 11H1Z" fill="none" stroke="#f0f0f0" stroke-width="1.5" stroke-linejoin="round"/><path d="M13 5Q15 8.5 13 12" fill="none" stroke="#f0f0f0" stroke-width="1.5"/><path d="M16 2.5Q20 8.5 16 14.5" fill="none" stroke="#888" stroke-width="1.5"/></svg>
<svg style="left:1752px;top:1039px;" width="22" height="17" viewBox="0 0 22 17"><rect x="1" y="5" width="17" height="11" rx="2" fill="none" stroke="#f0f0f0" stroke-width="1.6"/><rect x="18.5" y="8" width="2.5" height="5" fill="#f0f0f0"/><rect x="2.5" y="6.5" width="14" height="8" fill="#f0f0f0"/><path d="M7 0L3 6H6L4 11" stroke="#222" stroke-width="1.4" fill="none"/></svg>
<div class="t" style="right:54px;top:1031.94px;font-size:14.6px;color:#f4f4f4;">18:34</div>
<div class="t" style="right:54px;top:1051.94px;font-size:14.6px;color:#f4f4f4;">19.10.2025</div>
<svg style="left:1876px;top:1039px;" width="19" height="21" viewBox="0 0 19 21"><path d="M9 3Q3 3 3 10V14L1 17H17L15 14V10Q15 3 9 3Z" fill="#f0f0f0"/><circle cx="9" cy="18.5" r="2" fill="#f0f0f0"/><path d="M8 7H12L8 12H12" stroke="#222" stroke-width="1.3" fill="none"/><path d="M13 1H17L13 5H17" stroke="#f0f0f0" stroke-width="1.3" fill="none"/></svg>
</body></html>
